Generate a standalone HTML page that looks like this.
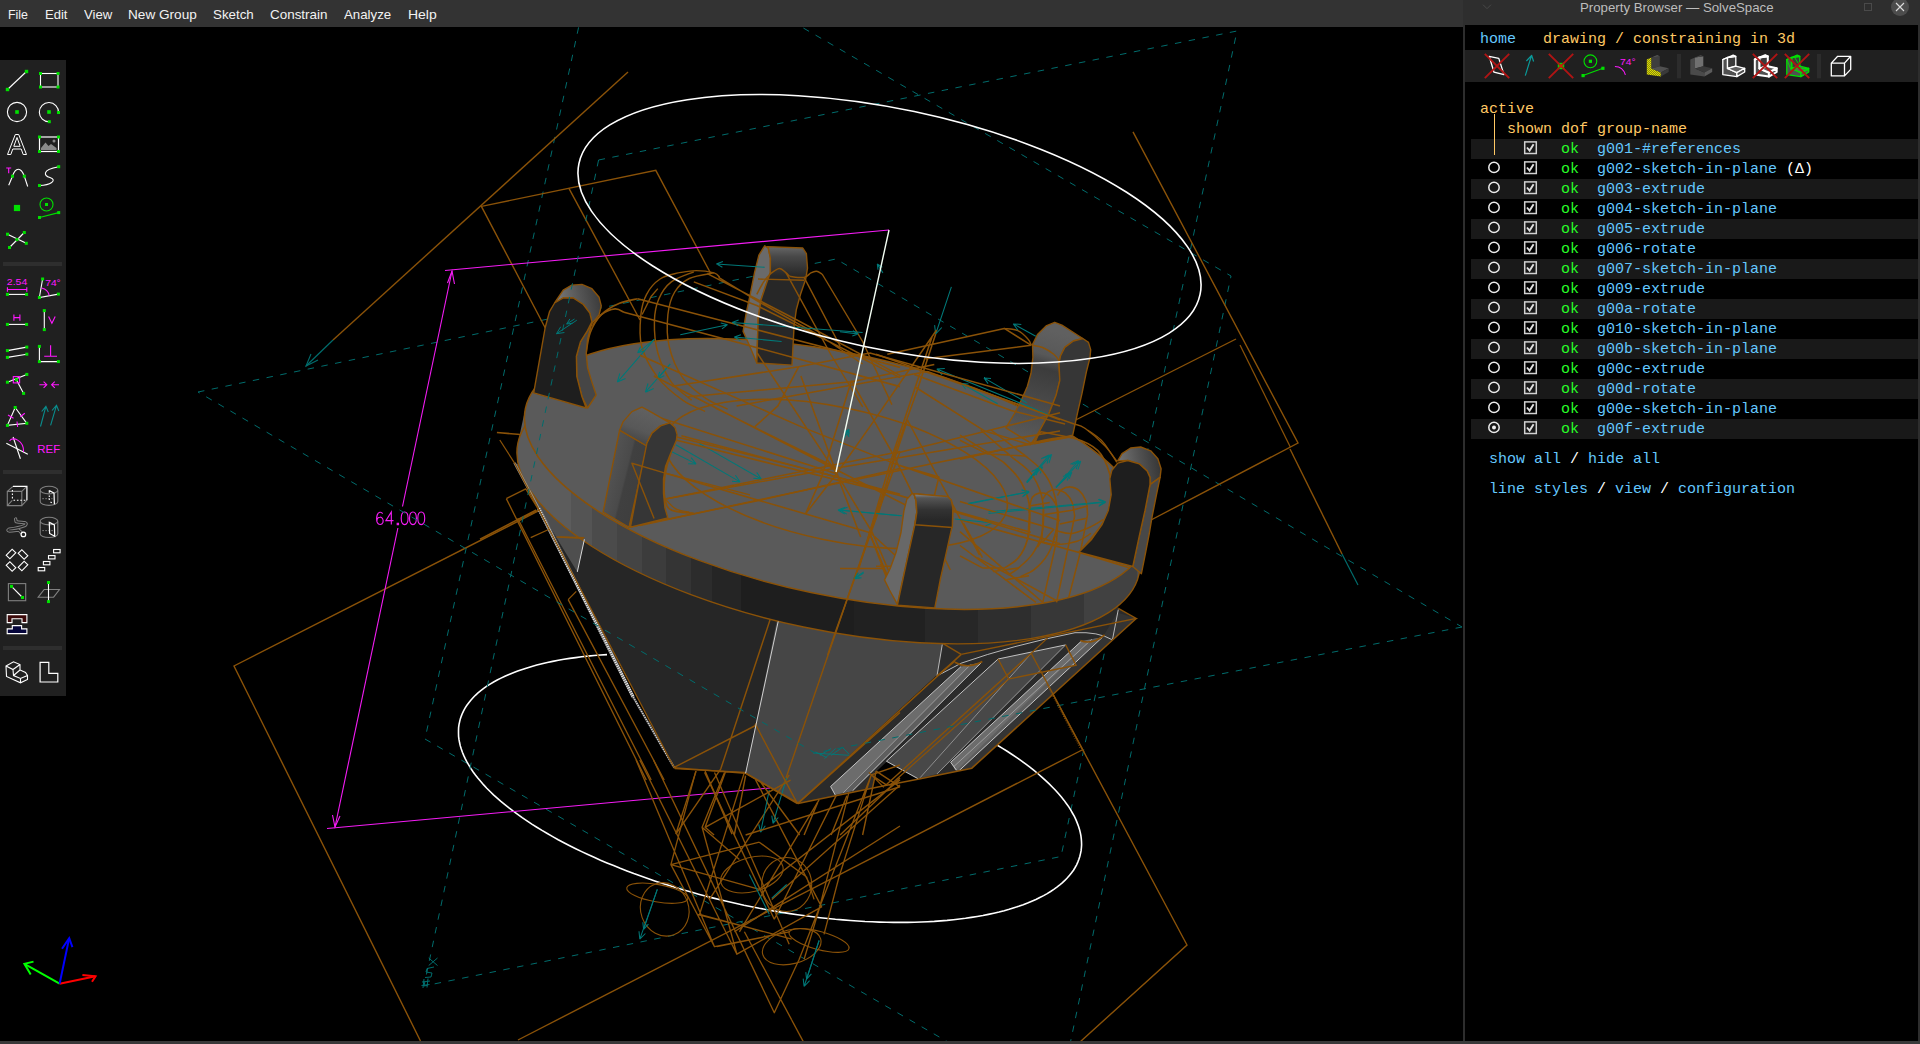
<!DOCTYPE html>
<html>
<head>
<meta charset="utf-8">
<title>SolveSpace</title>
<style>
html,body{margin:0;padding:0;background:#000;}
body{width:1920px;height:1044px;overflow:hidden;position:relative;font-family:"Liberation Sans",sans-serif;}
#view{position:absolute;left:0;top:0;width:1920px;height:1044px;}
#menubar{position:absolute;left:0;top:0;width:1463px;height:27px;background:#333333;}
#menubar span{position:absolute;top:7px;font-size:13.5px;line-height:16px;color:#f2f2f2;white-space:nowrap;transform-origin:0 50%;}
#toolbar{position:absolute;left:0;top:60px;width:66px;height:636px;background:#202020;}
#toolbar .sep{position:absolute;left:3px;width:59px;height:4px;background:#2e2e2e;}
#toolbar svg{position:absolute;left:0;top:0;}
#bottom{position:absolute;left:0;top:1041px;width:1920px;height:3px;background:#393939;}
#pborder{position:absolute;left:1463px;top:0;width:457px;height:1041px;background:#2d2d2d;}
#panel{position:absolute;left:1465px;top:25px;width:453px;height:1016px;background:#000;overflow:hidden;}
#ptitle{position:absolute;left:1463px;top:0;width:457px;height:25px;background:#2e2e2e;}
#ptitle .t{position:absolute;left:117.3px;top:0px;transform:scaleX(0.981);font-size:13.5px;line-height:16px;color:#bdbdbd;white-space:nowrap;transform-origin:0 50%;}
.row{position:absolute;left:6px;width:447px;height:20px;background:#191919;}
.tx{position:absolute;margin-top:2px;font-family:"Liberation Mono",monospace;font-size:15px;line-height:20px;height:20px;white-space:pre;letter-spacing:0;}
.l{color:#64c8ff;} .t2{color:#ffc864;} .s{color:#28ff28;} .d{color:#ffffff;}
#pbar{position:absolute;left:0;top:25px;width:453px;height:32px;background:#202020;}
</style>
</head>
<body>
<svg id="view" width="1920" height="1044" viewBox="0 0 1920 1044">
<!--VIEW-START-->
<defs>
<linearGradient id="rim" gradientUnits="userSpaceOnUse" x1="515" y1="0" x2="1150" y2="0"><stop offset="0.0000" stop-color="#5c5c5c"/><stop offset="0.0882" stop-color="#5c5c5c"/><stop offset="0.0882" stop-color="#545454"/><stop offset="0.1213" stop-color="#545454"/><stop offset="0.1213" stop-color="#4b4b4b"/><stop offset="0.1606" stop-color="#4b4b4b"/><stop offset="0.1606" stop-color="#444444"/><stop offset="0.2000" stop-color="#444444"/><stop offset="0.2000" stop-color="#3c3c3c"/><stop offset="0.2378" stop-color="#3c3c3c"/><stop offset="0.2378" stop-color="#343434"/><stop offset="0.2772" stop-color="#343434"/><stop offset="0.2772" stop-color="#2c2c2c"/><stop offset="0.3102" stop-color="#2c2c2c"/><stop offset="0.3102" stop-color="#252525"/><stop offset="0.3559" stop-color="#252525"/><stop offset="0.3559" stop-color="#1e1e1e"/><stop offset="0.5339" stop-color="#1e1e1e"/><stop offset="0.5339" stop-color="#212121"/><stop offset="0.6457" stop-color="#212121"/><stop offset="0.6457" stop-color="#272727"/><stop offset="0.7291" stop-color="#272727"/><stop offset="0.7291" stop-color="#2e2e2e"/><stop offset="0.8126" stop-color="#2e2e2e"/><stop offset="0.8126" stop-color="#373737"/><stop offset="0.8961" stop-color="#373737"/><stop offset="0.8961" stop-color="#414141"/><stop offset="0.9795" stop-color="#414141"/><stop offset="0.9795" stop-color="#4b4b4b"/><stop offset="1.0000" stop-color="#4b4b4b"/></linearGradient>
<linearGradient id="capd" x1="0" y1="0" x2="0" y2="1"><stop offset="0" stop-color="#4e4e4e"/><stop offset="0.22" stop-color="#2a2a2a"/><stop offset="1" stop-color="#242424"/></linearGradient>
<linearGradient id="capA" x1="0" y1="1" x2="1" y2="0"><stop offset="0" stop-color="#6a6a6a"/><stop offset="1" stop-color="#3a3a3a"/></linearGradient>
<clipPath id="vclip"><rect x="0" y="27" width="1463" height="1014"/></clipPath>
</defs>
<g clip-path="url(#vclip)">
<g id="dashback">
<path d="M198.0 392.0 L836.0 259.0 L1462.0 627.0" stroke="#006c6c" stroke-width="1.0" fill="none" stroke-dasharray="6.5 7.5"/>
<path d="M584.5 0.0 L425.0 739.0 L960.0 1049.0" stroke="#006c6c" stroke-width="1.0" fill="none" stroke-dasharray="6.5 7.5"/>
<path d="M755.0 0.0 L1231.0 276.0 L1069.0 1049.0" stroke="#006c6c" stroke-width="1.0" fill="none" stroke-dasharray="6.5 7.5"/>
<path d="M598.6 160.0 L1237.0 31.0 L1061.0 856.5 L424.0 986.0" stroke="#006c6c" stroke-width="1.0" fill="none" stroke-dasharray="6.5 7.5"/>
</g>
<path d="M997.0 745.0 L1002.1 748.1 L1007.2 751.3 L1012.1 754.5 L1016.8 757.7 L1021.4 760.9 L1025.9 764.2 L1030.2 767.4 L1034.3 770.7 L1038.3 774.0 L1042.1 777.3 L1045.7 780.6 L1049.2 783.9 L1052.5 787.2 L1055.7 790.5 L1058.6 793.8 L1061.4 797.1 L1064.1 800.4 L1066.5 803.7 L1068.8 806.9 L1070.8 810.2 L1072.7 813.5 L1074.5 816.7 L1076.0 819.9 L1077.3 823.1 L1078.5 826.3 L1079.5 829.4 L1080.3 832.6 L1080.9 835.7 L1081.3 838.8 L1081.5 841.8 L1081.6 844.8 L1081.4 847.8 L1081.1 850.7 L1080.5 853.6 L1079.8 856.5 L1078.9 859.3 L1077.8 862.1 L1076.6 864.8 L1075.1 867.5 L1073.5 870.2 L1071.6 872.8 L1069.6 875.3 L1067.4 877.8 L1065.1 880.2 L1062.5 882.6 L1059.8 884.9 L1056.9 887.2 L1053.8 889.4 L1050.6 891.5 L1047.2 893.6 L1043.6 895.6 L1039.8 897.5 L1035.9 899.4 L1031.8 901.2 L1027.6 903.0 L1023.2 904.7 L1018.7 906.3 L1014.0 907.8 L1009.2 909.3 L1004.2 910.7 L999.1 912.0 L993.8 913.2 L988.4 914.4 L982.9 915.5 L977.2 916.5 L971.4 917.4 L965.5 918.3 L959.5 919.0 L953.4 919.7 L947.1 920.4 L940.8 920.9 L934.3 921.4 L927.8 921.7 L921.1 922.0 L914.4 922.2 L907.6 922.4 L900.6 922.4 L893.6 922.4 L886.6 922.3 L879.4 922.1 L872.2 921.8 L865.0 921.5 L857.7 921.0 L850.3 920.5 L842.9 919.9 L835.4 919.3 L827.9 918.5 L820.3 917.7 L812.8 916.8 L805.2 915.8 L797.5 914.7 L789.9 913.6 L782.3 912.4 L774.6 911.1 L766.9 909.7 L759.3 908.3 L751.6 906.7 L744.0 905.2 L736.4 903.5 L728.8 901.8 L721.2 900.0 L713.6 898.1 L706.1 896.2 L698.6 894.2 L691.2 892.1 L683.8 890.0 L676.5 887.8 L669.2 885.6 L662.0 883.3 L654.8 880.9 L647.8 878.5 L640.8 876.0 L633.8 873.5 L627.0 870.9 L620.2 868.3 L613.6 865.6 L607.0 862.9 L600.5 860.2 L594.1 857.3 L587.9 854.5 L581.7 851.6 L575.7 848.7 L569.7 845.7 L563.9 842.7 L558.2 839.7 L552.7 836.6 L547.3 833.5 L542.0 830.4 L536.8 827.2 L531.8 824.1 L527.0 820.9 L522.2 817.7 L517.7 814.4 L513.3 811.2 L509.0 807.9 L504.9 804.6 L500.9 801.4 L497.2 798.1 L493.5 794.8 L490.1 791.5 L486.8 788.2 L483.7 784.9 L480.8 781.5 L478.0 778.3 L475.4 775.0 L473.0 771.7 L470.8 768.4 L468.8 765.1 L466.9 761.9 L465.2 758.7 L463.7 755.4 L462.4 752.2 L461.3 749.1 L460.3 745.9 L459.6 742.8 L459.0 739.7 L458.6 736.6 L458.5 733.6 L458.5 730.6 L458.6 727.6 L459.0 724.7 L459.6 721.8 L460.3 718.9 L461.3 716.1 L462.4 713.3 L463.7 710.6 L465.2 707.9 L466.9 705.3 L468.8 702.7 L470.8 700.2 L473.0 697.7 L475.4 695.3 L478.0 692.9 L480.8 690.6 L483.7 688.4 L486.8 686.2 L490.1 684.1 L493.6 682.0 L497.2 680.0 L501.0 678.1 L504.9 676.2 L509.0 674.4 L513.3 672.7 L517.7 671.0 L522.3 669.4 L527.0 667.9 L531.8 666.4 L536.8 665.1 L542.0 663.8 L547.3 662.5 L552.7 661.4 L558.3 660.3 L563.9 659.3 L569.7 658.4 L575.7 657.6 L581.7 656.8 L587.9 656.1 L594.1 655.5 L600.5 655.0 L607.0 654.6" stroke="#ffffff" stroke-width="1.6" fill="none" />
<g id="obehind">
<path d="M628.0 72.0 L333.0 340.0" stroke="#8a5208" stroke-width="1.4" fill="none" />
<path d="M333.0 340.0 L306.0 366.0" stroke="#006c6c" stroke-width="1.2" fill="none" />
<path d="M318.0 360.0 L306.0 366.0 L311.0 354.0" stroke="#006c6c" stroke-width="1.1" fill="none" />
<path d="M545.3 328.0 L481.4 206.4 L655.8 170.3 L711.0 274.0" stroke="#8a5208" stroke-width="1.4" fill="none" />
<path d="M568.8 188.2 L640.0 320.0" stroke="#8a5208" stroke-width="1.4" fill="none" />
<path d="M548.0 506.0 L234.0 666.0 L420.5 1041.0" stroke="#8a5208" stroke-width="1.4" fill="none" />
<path d="M518.0 1040.0 L1082.0 750.0" stroke="#8a5208" stroke-width="1.4" fill="none" />
<path d="M1031.0 653.0 L1187.0 945.0 L1080.0 1042.0" stroke="#8a5208" stroke-width="1.4" fill="none" />
<path d="M1133.0 131.8 L1298.0 443.0 L1151.0 520.0" stroke="#8a5208" stroke-width="1.4" fill="none" />
<path d="M1290.0 449.0 L1342.0 554.0" stroke="#8a5208" stroke-width="1.4" fill="none" />
<path d="M1342.0 554.0 L1358.0 585.0" stroke="#006c6c" stroke-width="1.2" fill="none" />
<path d="M1236.0 339.0 L1042.0 437.0" stroke="#8a5208" stroke-width="1.4" fill="none" />
</g>
<g id="dim">
<path d="M445.0 270.5 L889.0 230.0" stroke="#f51cf5" stroke-width="1.1" fill="none" />
<path d="M327.0 828.5 L770.0 788.0" stroke="#f51cf5" stroke-width="1.1" fill="none" />
<path d="M452.0 271.0 L402.5 506.5" stroke="#f51cf5" stroke-width="1.1" fill="none" />
<path d="M397.9 528.0 L335.0 827.0" stroke="#f51cf5" stroke-width="1.1" fill="none" />
<path d="M447.5 283.0 L452.0 271.0 L454.5 284.0" stroke="#f51cf5" stroke-width="1.1" fill="none" />
<path d="M332.5 815.0 L335.0 827.0 L340.0 816.0" stroke="#f51cf5" stroke-width="1.1" fill="none" />
<path d="M382.6 513.6 C381.40000000000003 511.6 378.20000000000005 511.6 377.20000000000005 515 C376.40000000000003 518 376.40000000000003 521 377.40000000000003 522.8000000000001 C378.6 525.2 381.8 525.2 383.00000000000006 522.2 C383.8 519.2 381.8 517.0 380.0 517.2 C378.20000000000005 517.2 377.0 519.0 376.90000000000003 521.0 M391.3 524.6 V512 L385.9 520.6 H393.5 M397.2 523.2 h1.3 v1.4 h-1.3 Z M404.65 512 C401.8 512 401.2 515 401.2 518.3 C401.2 521.6 401.8 524.6 404.65 524.6 C407.49999999999994 524.6 408.09999999999997 521.6 408.09999999999997 518.3 C408.09999999999997 515 407.49999999999994 512 404.65 512 Z M412.95 512 C410.1 512 409.5 515 409.5 518.3 C409.5 521.6 410.1 524.6 412.95 524.6 C415.79999999999995 524.6 416.4 521.6 416.4 518.3 C416.4 515 415.79999999999995 512 412.95 512 Z M421.25 512 C418.40000000000003 512 417.8 515 417.8 518.3 C417.8 521.6 418.40000000000003 524.6 421.25 524.6 C424.09999999999997 524.6 424.7 521.6 424.7 518.3 C424.7 515 424.09999999999997 512 421.25 512 Z " stroke="#f51cf5" stroke-width="1.15" fill="none" />
</g>
<g id="model">
<polygon points="514.4,462.8 674.0,767.3 745.6,773.3 778.2,621.4 700.0,560.0" fill="#262626" stroke="none" stroke-width="1" />
<polygon points="514.4,462.8 538.8,508.4 577.3,571.9 584.4,539.3 600.0,500.0" fill="#4e4e4e" stroke="none" stroke-width="1" />
<polygon points="778.0,615.0 745.6,773.3 797.4,803.7 937.0,675.0 946.0,640.0" fill="#464646" stroke="none" stroke-width="1" />
<polygon points="942.3,643.2 942.3,621.1 1118.3,587.4 1118.3,608.4 1136.2,618.5 971.8,768.2 919.1,779.1 885.4,785.5 797.9,803.4 937.0,675.9" fill="#2b2b2b" stroke="none" stroke-width="1" stroke-linejoin="round"/>
<polygon points="1102.4,637.9 1117.2,612.6 1136.2,618.5 971.8,768.2 959.1,770.7" fill="#343434" stroke="none" stroke-width="1" stroke-linejoin="round"/>
<polygon points="961.2,666.4 981.3,662.6 852.7,790.7 835.2,794.9 830.6,786.5" fill="#6c6c6c" stroke="none" stroke-width="1" stroke-linejoin="round"/>
<polygon points="970.7,664.5 981.3,662.6 852.7,790.7 843.2,792.8" fill="#5e5e5e" stroke="none" stroke-width="1" stroke-linejoin="round"/>
<polygon points="998.1,659.0 1065.6,644.9 937.0,773.9 918.0,778.7 886.4,761.2" fill="#484848" stroke="none" stroke-width="1" stroke-linejoin="round"/>
<polygon points="1081.4,641.1 1102.4,637.3 959.1,770.7 955.3,770.3 950.7,762.3" fill="#6c6c6c" stroke="none" stroke-width="1" stroke-linejoin="round"/>
<polygon points="1091.9,639.2 1102.4,637.3 959.1,770.7 956.6,770.3" fill="#5e5e5e" stroke="none" stroke-width="1" stroke-linejoin="round"/>
<polygon points="886.4,761.9 917.4,779.1 885.4,785.9 872.7,788.2 875.3,772.4" fill="#000000" stroke="none" stroke-width="1" stroke-linejoin="round"/>
<path d="M961.2 666.4 L830.6 786.5" stroke="#d0d0d0" stroke-width="0.9" fill="none" />
<path d="M981.3 662.6 L852.7 790.7" stroke="#d0d0d0" stroke-width="0.9" fill="none" />
<path d="M970.7 664.5 L843.2 792.8" stroke="#a8a8a8" stroke-width="0.8" fill="none" />
<path d="M998.1 659.0 L886.4 761.2 L918.0 778.7" stroke="#d0d0d0" stroke-width="0.9" fill="none" />
<path d="M998.1 659.0 L1065.6 644.9" stroke="#d0d0d0" stroke-width="0.9" fill="none" />
<path d="M1065.6 644.9 L937.0 773.9" stroke="#b0b0b0" stroke-width="0.8" fill="none" />
<path d="M1032.9 651.6 L920.1 777.7" stroke="#a0a0a0" stroke-width="0.8" fill="none" />
<path d="M1081.4 641.1 L950.7 762.3" stroke="#d0d0d0" stroke-width="0.9" fill="none" />
<path d="M1102.4 637.3 L959.1 770.7" stroke="#d0d0d0" stroke-width="0.9" fill="none" />
<path d="M1091.9 639.2 L953.9 766.5" stroke="#a8a8a8" stroke-width="0.8" fill="none" />
<path d="M830.6 786.5 L835.2 794.9" stroke="#d0d0d0" stroke-width="0.9" fill="none" />
<path d="M950.7 762.3 L956.6 770.3" stroke="#d0d0d0" stroke-width="0.9" fill="none" />
<path d="M942.3 644.3 L937.0 675.9 L961.2 663.2" stroke="#c8c8c8" stroke-width="0.9" fill="none" />
<path d="M961.2 663.2 Q1011.8 645.3 1075.0 632.7 Q1098.2 631.6 1111.9 639.6" stroke="#c8c8c8" stroke-width="0.9" fill="none"/>
<path d="M1118.3 609.5 L1112.6 639.0" stroke="#c8c8c8" stroke-width="0.9" fill="none" />
<path d="M961.2 654.4 L797.9 803.4" stroke="#8a5208" stroke-width="1.566" fill="none" />
<path d="M1136.2 618.5 L971.8 768.2 L919.1 779.1 L885.4 785.5 L797.9 803.4" stroke="#8a5208" stroke-width="1.566" fill="none" />
<path d="M961.2 654.4 L1136.2 618.5 L1118.3 608.4" stroke="#8a5208" stroke-width="1.3920000000000001" fill="none" />
<path d="M942.3 643.2 L961.2 654.4" stroke="#8a5208" stroke-width="1.3920000000000001" fill="none" />
<path d="M937.0 675.9 L954.9 661.1" stroke="#8a5208" stroke-width="1.3920000000000001" fill="none" />
<path d="M1031.8 652.7 L885.4 785.5" stroke="#8a5208" stroke-width="1.3920000000000001" fill="none" />
<path d="M1008.7 679.0 L889.6 785.5" stroke="#8a5208" stroke-width="1.218" fill="none" />
<path d="M998.1 659.0 L1008.7 679.0 L1076.1 665.3 L1065.6 644.9" stroke="#8a5208" stroke-width="1.3920000000000001" fill="none" />
<path d="M1031.8 652.7 L1047.7 637.9" stroke="#8a5208" stroke-width="1.218" fill="none" />
<path d="M954.9 662.2 Q967.6 669.5 982.3 661.5" stroke="#8a5208" stroke-width="1.6" fill="none"/>
<path d="M1080.3 640.5 Q1091.9 645.3 1104.6 634.8" stroke="#8a5208" stroke-width="1.6" fill="none"/>
<polygon points="1139.1,573.8 1138.3,576.9 1137.3,580.0 1136.2,583.0 1134.8,585.9 1133.2,588.8 1131.3,591.6 1129.3,594.4 1127.1,597.1 1124.7,599.7 1122.0,602.3 1119.2,604.9 1116.2,607.3 1112.9,609.7 1109.5,612.0 1105.9,614.3 1102.1,616.4 1098.1,618.6 1093.9,620.6 1089.5,622.5 1085.0,624.4 1080.2,626.2 1075.4,627.9 1070.3,629.5 1065.1,631.1 1059.7,632.6 1054.1,633.9 1048.4,635.2 1042.6,636.4 1036.6,637.5 1030.4,638.6 1024.2,639.5 1017.7,640.4 1011.2,641.1 1004.5,641.8 997.7,642.4 990.8,642.9 983.8,643.2 976.7,643.5 969.5,643.8 962.1,643.9 954.7,643.9 947.2,643.8 939.6,643.7 932.0,643.4 924.3,643.1 916.5,642.6 908.6,642.1 900.7,641.5 892.7,640.7 884.7,639.9 876.7,639.0 868.6,638.1 860.5,637.0 852.4,635.8 844.3,634.6 836.1,633.2 827.9,631.8 819.8,630.3 811.6,628.7 803.5,627.0 795.4,625.3 787.3,623.5 779.2,621.5 771.2,619.6 763.2,617.5 755.2,615.3 747.3,613.1 739.5,610.8 731.7,608.5 724.0,606.1 716.3,603.6 708.7,601.0 701.3,598.4 693.9,595.7 686.5,593.0 679.3,590.2 672.2,587.3 665.2,584.4 658.3,581.4 651.6,578.4 644.9,575.4 638.4,572.3 632.0,569.1 625.7,565.9 619.6,562.7 613.6,559.4 607.8,556.1 602.1,552.8 596.6,549.4 591.2,546.0 586.0,542.6 581.0,539.2 576.1,535.7 571.4,532.2 566.9,528.7 562.5,525.2 558.4,521.7 554.4,518.1 550.6,514.6 547.0,511.0 543.6,507.5 540.4,503.9 537.4,500.4 534.6,496.9 532.0,493.3 529.6,489.8 527.4,486.3 525.4,482.8 523.6,479.3 522.0,475.9 520.7,472.5 519.5,469.0 518.6,465.7 517.8,462.3 517.3,459.0 517.0,455.7 516.9,452.5 517.0,449.2 517.4,446.1 517.9,443.0 518.7,439.9 519.7,436.8 520.8,433.8 522.2,430.9 523.8,428.0 525.7,425.2 527.7,422.4 529.9,419.7 532.3,417.1 535.0,414.5 537.8,411.9 540.8,409.5 544.1,407.1 547.5,404.8 551.1,402.5 554.9,400.4 558.9,398.2 563.1,396.2 567.5,394.3 572.0,392.4 576.8,390.6 581.6,388.9 586.7,387.3 591.9,385.7 597.3,384.2 602.9,382.9 608.6,381.6 614.4,380.4 620.4,379.3 626.6,378.2 632.8,377.3 639.3,376.4 645.8,375.7 652.5,375.0 659.3,374.4 666.2,373.9 673.2,373.6 680.3,373.3 687.5,373.0 694.9,372.9 702.3,372.9 709.8,373.0 717.4,373.1 725.0,373.4 732.7,373.7 740.5,374.2 748.4,374.7 756.3,375.3 764.3,376.1 772.3,376.9 780.3,377.8 788.4,378.7 796.5,379.8 804.6,381.0 812.7,382.2 820.9,383.6 829.1,385.0 837.2,386.5 845.4,388.1 853.5,389.8 861.6,391.5 869.7,393.3 877.8,395.3 885.8,397.2 893.8,399.3 901.8,401.5 909.7,403.7 917.5,406.0 925.3,408.3 933.0,410.7 940.7,413.2 948.3,415.8 955.7,418.4 963.1,421.1 970.5,423.8 977.7,426.6 984.8,429.5 991.8,432.4 998.7,435.4 1005.4,438.4 1012.1,441.4 1018.6,444.5 1025.0,447.7 1031.3,450.9 1037.4,454.1 1043.4,457.4 1049.2,460.7 1054.9,464.0 1060.4,467.4 1065.8,470.8 1071.0,474.2 1076.0,477.6 1080.9,481.1 1085.6,484.6 1090.1,488.1 1094.5,491.6 1098.6,495.1 1102.6,498.7 1106.4,502.2 1110.0,505.8 1113.4,509.3 1116.6,512.9 1119.6,516.4 1122.4,519.9 1125.0,523.5 1127.4,527.0 1129.6,530.5 1131.6,534.0 1133.4,537.5 1135.0,540.9 1136.3,544.3 1137.5,547.8 1138.4,551.1 1139.2,554.5 1139.7,557.8 1140.0,561.1 1140.1,564.3 1140.0,567.6 1139.6,570.7" fill="url(#rim)" stroke="none" stroke-width="1" />
<polygon points="1146.5,539.7 525.5,408.1 518.0,442.6 1139.0,574.2" fill="url(#rim)" stroke="none" stroke-width="1" />
<ellipse cx="828.5" cy="508.4" rx="317.4" ry="121.25" transform="rotate(11.9 828.5 508.4)" fill="none" stroke="#8a5208" stroke-width="1.4" />
<ellipse cx="836" cy="473.9" rx="317.4" ry="121.25" transform="rotate(11.9 836 473.9)" fill="#5a5a5a" stroke="#8a5208" stroke-width="1.5" />
<defs>
<linearGradient id="gA" gradientUnits="userSpaceOnUse" x1="560" y1="300" x2="600" y2="292"><stop offset="0" stop-color="#747474"/><stop offset="0.5" stop-color="#555555"/><stop offset="1" stop-color="#3a3a3a"/></linearGradient>
<linearGradient id="gD" gradientUnits="userSpaceOnUse" x1="1120" y1="458" x2="1160" y2="452"><stop offset="0" stop-color="#707070"/><stop offset="0.5" stop-color="#505050"/><stop offset="1" stop-color="#343434"/></linearGradient>
<linearGradient id="gB" gradientUnits="userSpaceOnUse" x1="0" y1="246" x2="0" y2="276"><stop offset="0" stop-color="#686868"/><stop offset="0.35" stop-color="#484848"/><stop offset="1" stop-color="#272727"/></linearGradient>
<linearGradient id="gE" gradientUnits="userSpaceOnUse" x1="0" y1="494" x2="0" y2="520"><stop offset="0" stop-color="#8a8a8a"/><stop offset="0.15" stop-color="#555555"/><stop offset="0.6" stop-color="#333333"/><stop offset="1" stop-color="#282828"/></linearGradient>
<linearGradient id="gC" gradientUnits="userSpaceOnUse" x1="1050" y1="330" x2="1020" y2="440"><stop offset="0" stop-color="#606060"/><stop offset="0.22" stop-color="#585858"/><stop offset="0.34" stop-color="#3c3c3c"/><stop offset="0.6" stop-color="#484848"/><stop offset="1" stop-color="#5a5a5a"/></linearGradient>
<linearGradient id="gF" gradientUnits="userSpaceOnUse" x1="640" y1="408" x2="628" y2="440"><stop offset="0" stop-color="#606060"/><stop offset="0.6" stop-color="#585858"/><stop offset="1" stop-color="#454545"/></linearGradient>
<linearGradient id="gF2" gradientUnits="userSpaceOnUse" x1="605" y1="470" x2="645" y2="480"><stop offset="0" stop-color="#555555"/><stop offset="0.5" stop-color="#4a4a4a"/><stop offset="0.55" stop-color="#404040"/><stop offset="1" stop-color="#3e3e3e"/></linearGradient>
</defs>
<polygon points="764.7,245.8 758.9,255.2 754.6,272.4 750.3,294.0 746.0,314.1 743.1,331.4 748.9,344.3 756.8,363.0 757.5,340.0 758.2,318.4 761.1,299.7 766.8,282.5 770.4,272.4 770.4,258.1 768.3,248.0" fill="#6a6a6a" stroke="#8a5208" stroke-width="1.4" stroke-linejoin="round" />
<polygon points="767.5,246.6 802.8,248.0 806.4,253.7 807.5,268.1 805.6,279.6 800.6,294.0 796.3,309.8 794.1,325.6 793.1,344.3 792.0,365.1 756.8,363.0 757.5,340.0 758.2,318.4 761.1,299.7 766.8,282.5 770.4,272.4 770.4,258.1 768.3,248.0" fill="url(#gB)" stroke="#8a5208" stroke-width="1.4" stroke-linejoin="round" />
<polygon points="1054.7,322.3 1046.1,325.9 1037.5,334.5 1032.5,344.6 1032.9,357.5 1031.0,373.3 1027.4,386.2 1021.7,399.2 1014.5,413.5 1005.9,427.9 1031.7,443.7 1040.4,429.3 1049.0,413.5 1056.2,394.9 1059.8,380.5 1059.0,363.2 1060.5,356.0 1064.8,347.4 1073.4,341.0 1082.8,338.5 1061.9,325.2" fill="url(#gC)" stroke="#8a5208" stroke-width="1.4" stroke-linejoin="round" />
<polygon points="1059.0,363.2 1060.5,356.0 1064.8,347.4 1073.4,341.0 1082.8,338.5 1088.5,342.4 1090.7,349.6 1090.0,357.5 1086.4,371.9 1082.0,393.4 1077.7,412.1 1074.9,425.0 1072.7,435.1 1034.6,443.7 1040.4,429.3 1049.0,413.5 1056.2,394.9 1059.8,380.5" fill="#363636" stroke="#8a5208" stroke-width="1.4" stroke-linejoin="round" />
</g>
<path d="M514.4 462.8 L538.8 508.4" stroke="#9a9a9a" stroke-width="2.2" fill="none" stroke-linejoin="round" />
<path d="M538.8 508.4 L633.3 697.2" stroke="#6e6e6e" stroke-width="3.4" fill="none" stroke-linejoin="round" />
<path d="M538.8 508.4 L633.3 697.2" stroke="#f0f0f0" stroke-width="3.0" fill="none" stroke-linejoin="round" stroke-dasharray="1 1.2"/>
<path d="M633.3 697.2 L674.0 767.3" stroke="#5a5a5a" stroke-width="2.2" fill="none" stroke-linejoin="round" />
<path d="M633.3 697.2 L674.0 767.3" stroke="#e0e0e0" stroke-width="1.8" fill="none" stroke-linejoin="round" stroke-dasharray="0.9 1.4"/>
<path d="M499.8 440.0 L514.4 462.8 L674.0 767.3" stroke="#8a5208" stroke-width="1.248" fill="none" stroke-linejoin="round" />
<path d="M584.4 539.3 L577.3 571.9" stroke="#d8d8d8" stroke-width="1" fill="none" stroke-linejoin="round" />
<path d="M506.3 498.6 L646.3 780.0 M517.7 518.2 L651.2 780.0 M568.2 599.6 L664.2 780.0 M506.3 498.6 L525.8 488.8 L538.8 510.0 L517.7 519.8 M530.7 537.7 L548.6 529.5 M568.2 599.6 L576.3 591.4 M560.0 537.0 L584.4 537.7" stroke="#8a5208" stroke-width="1.3439999999999999" fill="none" stroke-linejoin="round" />
<path d="M545.3 328.0 L547.5 332.5" stroke="#8a5208" stroke-width="1.3439999999999999" fill="none" stroke-linejoin="round" />
<path d="M585.8 355.0 C586.5 351.3 587.7 339.3 590.3 332.5 C592.9 325.8 596.7 319.4 601.5 314.5 C606.4 309.7 613.5 305.9 619.5 303.3 C625.5 300.7 634.6 299.5 637.6 298.8" stroke="#8a5208" stroke-width="1.632" fill="none" />
<path d="M592.5 325.8 C594.0 323.9 597.8 317.3 601.5 314.5 C605.3 311.7 611.3 309.3 615.0 308.9 C618.8 308.5 622.5 311.7 624.0 312.3" stroke="#8a5208" stroke-width="1.632" fill="none" />
<path d="M637.6 298.8 L750.1 328.0 L862.6 357.3 L900.0 367.4" stroke="#8a5208" stroke-width="1.632" fill="none" stroke-linejoin="round" />
<path d="M624.0 312.3 L738.8 342.7 L900.0 386.6" stroke="#8a5208" stroke-width="1.632" fill="none" stroke-linejoin="round" />
<path d="M678.1 272.9 C675.1 273.9 665.3 275.4 660.1 279.0 C654.8 282.5 649.7 288.3 646.6 294.3 C643.4 300.2 641.8 305.9 640.9 314.5 C640.1 323.2 638.8 335.5 641.6 346.0 C644.4 356.5 651.0 368.5 657.8 377.6 C664.6 386.6 674.7 394.4 682.6 400.1 C690.4 405.7 701.3 409.4 705.1 411.3" stroke="#8a5208" stroke-width="1.44" fill="none" />
<path d="M693.8 271.8 C690.1 273.5 677.1 277.4 671.3 281.9 C665.5 286.4 661.7 292.2 658.9 298.8 C656.1 305.3 654.6 312.3 654.4 321.3 C654.2 330.3 655.0 342.7 657.8 352.8 C660.6 362.9 665.7 374.2 671.3 382.1 C676.9 389.9 688.2 397.1 691.6 400.1" stroke="#8a5208" stroke-width="1.44" fill="none" />
<path d="M714.1 272.9 C709.9 273.8 695.9 275.3 689.3 278.5 C682.8 281.7 678.3 286.0 674.7 292.0 C671.1 298.0 668.9 305.5 667.9 314.5 C667.0 323.5 666.6 335.5 669.1 346.0 C671.5 356.5 676.6 368.9 682.6 377.6 C688.6 386.2 697.6 392.6 705.1 397.8 C712.6 403.1 723.8 407.2 727.6 409.1" stroke="#8a5208" stroke-width="1.44" fill="none" />
<path d="M678.1 272.9 C681.1 272.5 690.1 270.6 696.1 270.6 C702.1 270.6 710.1 271.8 714.1 272.9 C718.0 274.0 718.8 276.6 719.7 277.4" stroke="#8a5208" stroke-width="1.44" fill="none" />
<path d="M718.6 277.4 L761.3 303.3 L822.1 337.0 L862.6 364.0 M693.8 281.9 L756.8 305.5 L828.9 341.5 L900.0 377.6 M707.3 273.6 L795.1 319.0 L900.0 375.3 M642.1 314.5 L651.1 296.5 L657.8 288.6" stroke="#8a5208" stroke-width="1.44" fill="none" stroke-linejoin="round" />
<path d="M756.8 294.3 C758.0 292.2 761.3 285.3 763.6 281.9 C765.8 278.5 767.7 276.3 770.3 274.0 C773.0 271.8 776.7 268.6 779.3 268.4 C782.0 268.2 784.4 271.6 786.1 272.9 C787.8 274.2 788.9 275.7 789.5 276.3" stroke="#8a5208" stroke-width="1.536" fill="none" />
<path d="M789.5 276.3 C791.9 276.5 800.5 278.0 804.1 277.4 C807.7 276.8 808.8 273.9 810.9 272.9 C812.9 271.9 814.6 271.1 816.5 271.3 C818.4 271.5 821.2 273.6 822.1 274.0" stroke="#8a5208" stroke-width="1.536" fill="none" />
<path d="M822.1 274.0 L862.6 341.5 L891.9 404.6 M786.1 272.9 L831.1 355.0 L862.6 406.8 M758.0 279.0 L804.1 280.3 M804.1 277.4 L840.1 346.0" stroke="#8a5208" stroke-width="1.44" fill="none" stroke-linejoin="round" />
<path d="M654.4 339.3 L617.3 382.1 M619.8 373.4 L617.3 382.1 M625.5 378.4 L617.3 382.1" stroke="#007878" stroke-width="1.05" fill="none"/>
<path d="M670.2 364.0 L645.4 392.2 M648.0 383.5 L645.4 392.2 M653.7 388.6 L645.4 392.2" stroke="#007878" stroke-width="1.05" fill="none"/>
<path d="M654.4 339.3 L637.6 352.8 M640.7 346.5 L637.6 352.8 M644.4 351.1 L637.6 352.8" stroke="#007878" stroke-width="1.05" fill="none"/>
<path d="M670.2 364.0 L657.8 378.7 M659.6 371.9 L657.8 378.7 M664.2 375.7 L657.8 378.7" stroke="#007878" stroke-width="1.05" fill="none"/>
<path d="M764.7 267.3 L716.3 263.9 M722.9 261.4 L716.3 263.9 M722.4 267.3 L716.3 263.9" stroke="#007878" stroke-width="1.05" fill="none"/>
<path d="M680.3 334.8 L727.6 324.7 M722.0 328.9 L727.6 324.7 M720.8 323.1 L727.6 324.7" stroke="#007878" stroke-width="1.05" fill="none"/>
<path d="M862.6 332.5 L732.1 322.4 M738.6 319.9 L732.1 322.4 M738.2 325.8 L732.1 322.4" stroke="#007878" stroke-width="1.05" fill="none"/>
<path d="M781.6 341.5 L734.3 337.0 M740.9 334.7 L734.3 337.0 M740.4 340.6 L734.3 337.0" stroke="#007878" stroke-width="1.05" fill="none"/>
<path d="M840.1 445.1 L849.1 429.3 M848.6 435.3 L849.1 429.3 M844.2 432.8 L849.1 429.3" stroke="#007878" stroke-width="1.05" fill="none"/>
<path d="M882.9 272.9 L877.3 263.9 M882.3 267.2 L877.3 263.9 M878.0 269.8 L877.3 263.9" stroke="#007878" stroke-width="1.05" fill="none"/>
<path d="M887.3 354.3 L1004.3 328.4 L1031.3 345.3 M925.5 358.8 L1031.3 345.3 M935.7 334.0 L916.5 392.5 L896.3 448.8 L878.3 514.1 M876.0 354.3 L1074.1 424.0 M914.3 374.5 L1011.1 410.5 L1065.1 424.0" stroke="#8a5208" stroke-width="1.536" fill="none" stroke-linejoin="round" />
<path d="M1004.3 328.4 C1006.6 328.8 1013.9 328.9 1017.8 330.6 C1021.7 332.4 1025.7 336.5 1027.9 339.0 C1030.2 341.4 1030.7 344.2 1031.3 345.3" stroke="#8a5208" stroke-width="1.44" fill="none" />
<path d="M1032.4 345.3 C1034.1 345.6 1039.0 346.0 1042.6 347.5 C1046.1 349.0 1051.0 352.0 1053.8 354.3 C1056.6 356.5 1058.5 359.9 1059.4 361.0" stroke="#8a5208" stroke-width="1.44" fill="none" />
<path d="M1074.1 424.0 C1076.0 424.8 1080.1 424.8 1085.3 428.5 C1090.6 432.3 1100.3 440.9 1105.6 446.6 C1110.8 452.2 1115.0 459.7 1116.8 462.3" stroke="#8a5208" stroke-width="1.44" fill="none" />
<path d="M951.4 286.8 L935.7 334.0 M934.6 325.1 L935.7 334.0 M941.8 327.5 L935.7 334.0" stroke="#007878" stroke-width="1.05" fill="none"/>
<path d="M1035.8 336.3 L1013.3 323.9 M1021.3 324.4 L1013.3 323.9 M1018.0 330.3 L1013.3 323.9" stroke="#007878" stroke-width="1.05" fill="none"/>
<path d="M1049.3 415.0 L936.8 368.9 M944.8 368.5 L936.8 368.9 M942.2 374.8 L936.8 368.9" stroke="#007878" stroke-width="1.05" fill="none"/>
<path d="M1026.8 402.7 L984.0 377.9 M991.0 378.5 L984.0 377.9 M988.1 383.6 L984.0 377.9" stroke="#007878" stroke-width="1.05" fill="none"/>
<path d="M997.6 403.8 L961.5 383.5 M968.5 384.1 L961.5 383.5 M965.6 389.2 L961.5 383.5" stroke="#007878" stroke-width="1.05" fill="none"/>
<path d="M1026.8 482.6 L1051.6 454.4 M1049.0 463.1 L1051.6 454.4 M1043.3 458.0 L1051.6 454.4" stroke="#007878" stroke-width="1.05" fill="none"/>
<path d="M1056.1 487.1 L1080.8 461.2 M1077.9 469.7 L1080.8 461.2 M1072.4 464.4 L1080.8 461.2" stroke="#007878" stroke-width="1.05" fill="none"/>
<path d="M1026.8 482.6 L1042.6 466.8 M1040.2 473.4 L1042.6 466.8 M1036.0 469.2 L1042.6 466.8" stroke="#007878" stroke-width="1.05" fill="none"/>
<path d="M1056.1 487.1 L1071.8 472.4 M1069.2 478.9 L1071.8 472.4 M1065.2 474.6 L1071.8 472.4" stroke="#007878" stroke-width="1.05" fill="none"/>
<path d="M968.3 503.9 L1029.1 491.6 M1023.4 495.7 L1029.1 491.6 M1022.3 489.9 L1029.1 491.6" stroke="#007878" stroke-width="1.05" fill="none"/>
<path d="M988.5 511.8 L1105.6 501.7 M1099.5 505.2 L1105.6 501.7 M1099.0 499.3 L1105.6 501.7" stroke="#007878" stroke-width="1.05" fill="none"/>
<path d="M840.0 331.8 L858.0 334.0 M852.3 335.9 L858.0 334.0 M852.9 330.8 L858.0 334.0" stroke="#007878" stroke-width="1.05" fill="none"/>
<path d="M633.0 463.9 L664.6 472.9 L869.4 532.5 L891.9 586.6 M629.7 526.9 L761.3 499.9 L900.0 468.4 M666.8 498.8 L900.0 451.5 M676.9 436.9 L817.6 471.8 L900.0 494.3 M827.7 655.0 L835.6 631.6 L900.0 451.5 M633.0 463.9 L654.4 519.0 M876.1 566.3 L891.9 566.3 L885.1 579.8 M496.9 432.4 L520.5 434.6 M480.0 539.3 L536.3 510.0 M556.5 537.0 L583.5 538.2" stroke="#8a5208" stroke-width="1.536" fill="none" stroke-linejoin="round" />
<path d="M675.8 440.3 C674.7 443.3 670.9 451.9 669.1 458.3 C667.2 464.6 665.2 471.8 664.6 478.5 C663.9 485.3 663.9 493.5 665.0 498.8 C666.1 504.0 666.5 507.6 671.3 510.0 C676.1 512.5 690.1 512.8 693.8 513.4" stroke="#8a5208" stroke-width="1.632" fill="none" />
<path d="M665.0 498.8 C666.8 500.5 671.8 506.7 675.8 508.9 C679.9 511.2 687.1 511.7 689.3 512.3" stroke="#8a5208" stroke-width="1.44" fill="none" />
<path d="M657.8 444.8 L696.1 463.9 M688.1 463.7 L696.1 463.9 M691.1 457.6 L696.1 463.9" stroke="#007878" stroke-width="1.05" fill="none"/>
<path d="M675.8 444.8 L740.0 481.9 M732.0 481.2 L740.0 481.9 M735.4 475.3 L740.0 481.9" stroke="#007878" stroke-width="1.05" fill="none"/>
<path d="M699.4 443.6 L761.3 479.0 M753.4 478.3 L761.3 479.0 M756.7 472.4 L761.3 479.0" stroke="#007878" stroke-width="1.05" fill="none"/>
<path d="M900.0 515.7 L837.9 510.0 M845.4 507.3 L837.9 510.0 M844.8 514.1 L837.9 510.0" stroke="#007878" stroke-width="1.05" fill="none"/>
<path d="M849.1 436.9 L844.6 430.1 M849.7 433.2 L844.6 430.1 M845.5 436.1 L844.6 430.1" stroke="#007878" stroke-width="1.05" fill="none"/>
<path d="M863.7 571.9 L853.6 578.7 M857.3 572.7 L853.6 578.7 M860.5 577.6 L853.6 578.7" stroke="#007878" stroke-width="1.05" fill="none"/>
<path d="M1031.6 442.9 C1035.1 442.2 1046.4 439.5 1053.1 438.6 C1059.9 437.8 1064.6 435.7 1072.1 437.8 C1079.5 439.8 1091.6 444.5 1097.9 450.7 C1104.3 456.9 1107.7 466.8 1110.0 474.8 C1112.3 482.9 1112.6 491.5 1111.7 499.0 C1110.9 506.4 1108.3 513.0 1104.8 519.7 C1101.4 526.3 1095.3 533.2 1091.0 538.6 C1086.7 544.1 1081.0 550.1 1079.0 552.4" stroke="#8a5208" stroke-width="1.632" fill="none" />
<path d="M1003.1 461.9 C1005.7 464.6 1014.5 472.1 1018.6 478.3 C1022.8 484.5 1026.2 492.1 1028.1 499.0 C1030.0 505.9 1030.0 512.8 1029.8 519.7 C1029.7 526.6 1029.1 534.0 1027.2 540.3 C1025.4 546.7 1022.4 553.0 1018.6 557.6 C1014.9 562.2 1007.1 566.2 1004.8 567.9" stroke="#8a5208" stroke-width="1.632" fill="none" />
<path d="M1013.4 458.4 C1016.3 460.9 1026.1 467.2 1030.7 473.1 C1035.3 479.0 1038.9 486.6 1041.0 493.8 C1043.2 501.0 1043.6 509.0 1043.6 516.2 C1043.6 523.4 1042.9 530.6 1041.0 536.9 C1039.2 543.2 1036.1 549.0 1032.4 554.1 C1028.7 559.3 1022.6 564.5 1018.6 567.9 C1014.6 571.4 1010.0 573.7 1008.3 574.8" stroke="#8a5208" stroke-width="1.536" fill="none" />
<path d="M1025.5 455.9 C1028.4 458.4 1038.2 465.6 1042.8 471.4 C1047.4 477.1 1050.7 483.4 1053.1 490.3 C1055.5 497.2 1057.0 505.6 1057.4 512.8 C1057.8 519.9 1057.3 526.6 1055.7 533.4 C1054.1 540.3 1051.5 548.1 1047.9 554.1 C1044.3 560.2 1038.7 565.9 1034.1 569.7 C1029.5 573.4 1022.6 575.4 1020.3 576.6" stroke="#8a5208" stroke-width="1.536" fill="none" />
<path d="M1029.0 512.8 C1029.1 511.6 1029.3 508.4 1029.8 505.9 C1030.4 503.3 1030.8 499.4 1032.4 497.2 C1034.0 495.1 1036.7 493.4 1039.3 492.9 C1041.9 492.5 1045.3 493.1 1047.9 494.7 C1050.5 496.2 1053.1 499.4 1054.8 502.4 C1056.6 505.4 1057.8 508.7 1058.3 512.8 C1058.7 516.8 1058.3 522.0 1057.4 526.6 C1056.6 531.1 1053.8 538.0 1053.1 540.3" stroke="#8a5208" stroke-width="1.536" fill="none" />
<path d="M1042.8 499.0 C1043.6 497.8 1045.8 493.6 1047.9 492.1 C1050.1 490.5 1052.8 489.3 1055.7 489.5 C1058.6 489.6 1062.4 490.8 1065.2 492.9 C1067.9 495.1 1070.5 498.5 1072.1 502.4 C1073.6 506.3 1074.2 513.9 1074.7 516.2" stroke="#8a5208" stroke-width="1.536" fill="none" />
<path d="M1057.4 495.5 C1058.1 494.5 1059.6 490.9 1061.7 489.5 C1063.9 488.0 1067.5 486.8 1070.3 486.9 C1073.2 487.0 1076.4 488.0 1079.0 490.3 C1081.6 492.6 1084.4 496.7 1085.9 500.7 C1087.3 504.7 1087.3 512.2 1087.6 514.5" stroke="#8a5208" stroke-width="1.536" fill="none" />
<path d="M1057.4 530.9 C1059.9 531.3 1066.5 534.2 1072.1 533.4 C1077.7 532.7 1085.9 528.9 1091.0 526.6 C1096.2 524.3 1101.1 520.8 1103.1 519.7" stroke="#8a5208" stroke-width="1.536" fill="none" />
<path d="M1042.8 542.1 C1045.1 542.5 1050.8 544.8 1056.6 544.7 C1062.3 544.5 1071.5 543.1 1077.2 541.2 C1083.0 539.3 1088.7 534.7 1091.0 533.4" stroke="#8a5208" stroke-width="1.44" fill="none" />
<path d="M1087.6 430.0 C1089.9 431.7 1097.4 436.3 1101.4 440.3 C1105.4 444.4 1109.1 450.7 1111.7 454.1 C1114.3 457.6 1116.0 459.9 1116.9 461.0" stroke="#8a5208" stroke-width="1.248" fill="none" />
<path d="M1029.8 505.9 L1028.1 536.9 M1043.6 505.9 L1041.9 540.3 L1037.6 547.2 M1058.3 512.8 L1056.6 540.3 L1042.8 602.4 M1074.7 516.2 L1056.6 602.4 M1087.6 514.5 L1080.7 550.7 L1068.6 598.1 M1044.5 514.5 L1072.1 510.2 L1087.6 505.9 M1029.0 505.9 L1049.7 502.4 M1060.0 524.0 L1087.6 517.9 M960.0 459.3 L1013.4 447.2 L1070.3 436.9 M960.0 435.2 L1003.1 461.9 M980.7 430.0 L1013.4 458.4 M991.0 430.0 L1025.5 455.9 M960.0 440.3 L987.6 454.1 L1025.5 455.9 M960.0 531.7 L1042.8 602.4 M960.0 545.5 L1035.9 602.4 M977.2 557.6 L1056.6 600.7 M982.4 567.9 L1004.8 567.9 M992.8 571.4 L1018.6 567.9 M1004.8 580.0 L1029.0 575.7 M960.0 555.9 L982.4 567.9 M960.0 501.6 L1053.1 529.1 M960.0 519.7 L1079.0 552.4 M1042.8 542.1 L1054.0 529.1 M963.4 523.1 L982.4 557.6 M1031.6 442.9 L1041.0 431.7 L1072.1 437.8 M1079.0 552.4 L1130.0 567.9" stroke="#8a5208" stroke-width="1.536" fill="none" stroke-linejoin="round" />
<path d="M907.5 420.0 L862.5 555.0 L846.8 600.1 M907.5 420.0 L979.5 555.0 M869.3 532.5 L896.3 602.3 M840.0 568.5 L882.8 568.5 L890.6 586.6 M880.5 564.0 L887.3 577.6" stroke="#8a5208" stroke-width="1.536" fill="none" stroke-linejoin="round" />
<path d="M1026.8 481.9 L1049.3 454.9 M1047.0 463.6 L1049.3 454.9 M1041.2 458.7 L1049.3 454.9" stroke="#007878" stroke-width="1.05" fill="none"/>
<path d="M1056.1 487.5 L1078.6 460.5 M1076.3 469.2 L1078.6 460.5 M1070.4 464.3 L1078.6 460.5" stroke="#007878" stroke-width="1.05" fill="none"/>
<path d="M1026.8 481.9 L1038.1 468.4 M1036.3 475.2 L1038.1 468.4 M1031.7 471.4 L1038.1 468.4" stroke="#007878" stroke-width="1.05" fill="none"/>
<path d="M1056.1 487.5 L1069.6 474.0 M1067.2 480.6 L1069.6 474.0 M1063.0 476.4 L1069.6 474.0" stroke="#007878" stroke-width="1.05" fill="none"/>
<path d="M968.3 503.3 L1029.1 492.0 M1022.5 496.7 L1029.1 492.0 M1021.3 490.0 L1029.1 492.0" stroke="#007878" stroke-width="1.05" fill="none"/>
<path d="M988.5 513.4 L1105.6 502.2 M1098.7 506.2 L1105.6 502.2 M1098.0 499.5 L1105.6 502.2" stroke="#007878" stroke-width="1.05" fill="none"/>
<path d="M954.8 519.0 L993.0 523.1 M985.5 525.7 L993.0 523.1 M986.2 519.0 L993.0 523.1" stroke="#007878" stroke-width="1.05" fill="none"/>
<path d="M901.9 515.7 L840.0 510.0 M847.5 507.3 L840.0 510.0 M846.9 514.1 L840.0 510.0" stroke="#007878" stroke-width="1.05" fill="none"/>
<path d="M863.6 573.0 L854.6 578.7 M858.4 572.8 L854.6 578.7 M861.6 577.8 L854.6 578.7" stroke="#007878" stroke-width="1.05" fill="none"/>
<path d="M636.1 760.0 L714.5 946.7 M639.8 760.0 L736.9 954.2 M653.5 760.0 L774.3 1012.7 L799.2 959.2 L871.3 774.9 M695.8 771.2 L670.9 864.6 L714.5 946.7 L789.2 931.8 M670.9 864.6 L739.4 847.1 L759.3 842.2 M724.5 772.4 L702.1 827.2 L736.9 954.2 L821.6 906.9 L755.6 779.9 M744.4 772.4 L699.6 914.3 L791.7 939.2 M702.1 827.2 L739.4 859.6 M674.7 768.7 L744.4 772.4 L799.2 803.6 M714.5 772.4 L754.3 864.6 L789.2 944.2 M704.6 772.4 L774.3 919.3 M789.2 774.9 L709.5 899.4 M819.1 799.8 L739.4 931.8 M836.5 794.9 L774.3 919.3 M848.9 792.4 L819.1 909.4 L804.1 959.2 M871.3 774.9 L839.0 877.0 L824.0 934.3 M900.0 826.0 L734.4 931.8 M900.0 779.9 L759.3 889.4 M900.0 784.9 L771.8 899.4 M744.4 931.8 L791.7 1019.9 M759.3 842.2 L806.6 877.0 L814.1 899.4 M670.9 864.6 L759.3 889.4 M697.1 914.3 L774.3 934.3 M717.0 946.7 L789.2 931.8 M886.3 784.9 L871.3 774.9 L900.0 765.0 M868.9 772.4 L883.8 787.4" stroke="#8a5208" stroke-width="1.3439999999999999" fill="none" stroke-linejoin="round" />
<ellipse cx="657.3" cy="893.2" rx="31" ry="8.7" transform="rotate(10 657.3 893.2)" fill="none" stroke="#8a5208" stroke-width="1.1199999999999999" />
<ellipse cx="664.7" cy="909.4" rx="24" ry="27" transform="rotate(-20 664.7 909.4)" fill="none" stroke="#8a5208" stroke-width="1.1199999999999999" />
<ellipse cx="751.9" cy="874.5" rx="32" ry="17" transform="rotate(-15 751.9 874.5)" fill="none" stroke="#8a5208" stroke-width="1.1199999999999999" />
<ellipse cx="786.7" cy="884.5" rx="25" ry="27" transform="rotate(0 786.7 884.5)" fill="none" stroke="#8a5208" stroke-width="1.1199999999999999" />
<ellipse cx="791.7" cy="946.7" rx="30" ry="17" transform="rotate(-15 791.7 946.7)" fill="none" stroke="#8a5208" stroke-width="1.1199999999999999" />
<ellipse cx="819" cy="940.5" rx="31" ry="9" transform="rotate(15 819 940.5)" fill="none" stroke="#8a5208" stroke-width="1.1199999999999999" />
<path d="M657.3 889.4 L639.8 939.2 M639.0 931.3 L639.8 939.2 M645.4 933.5 L639.8 939.2" stroke="#007878" stroke-width="1.05" fill="none"/>
<path d="M819.1 940.5 L804.1 986.5 M803.2 978.6 L804.1 986.5 M809.6 980.7 L804.1 986.5" stroke="#007878" stroke-width="1.05" fill="none"/>
<path d="M786.7 777.4 L773.0 823.5 M771.8 815.6 L773.0 823.5 M778.3 817.5 L773.0 823.5" stroke="#007878" stroke-width="1.05" fill="none"/>
<path d="M769.3 789.9 L760.6 832.2 M758.7 824.4 L760.6 832.2 M765.3 825.8 L760.6 832.2" stroke="#007878" stroke-width="1.05" fill="none"/>
<path d="M657.3 889.4 L643.6 929.3 M642.8 922.3 L643.6 929.3 M648.4 924.2 L643.6 929.3" stroke="#007878" stroke-width="1.05" fill="none"/>
<path d="M819.1 940.5 L806.6 979.1 M805.8 972.1 L806.6 979.1 M811.4 973.9 L806.6 979.1" stroke="#007878" stroke-width="1.05" fill="none"/>
<path d="M749.4 874.5 L769.3 914.3" stroke="#007878" stroke-width="1.1" fill="none" stroke-linejoin="round" />
<path d="M786.7 884.5 L771.8 898.2" stroke="#007878" stroke-width="1.1" fill="none" stroke-linejoin="round" />
<path d="M770.3 619.1 L720.8 768.8 L675.8 834.1 M846.9 600.0 L786.1 777.8 M673.6 767.7 L754.6 726.0 L756.8 722.7 M755.7 724.9 L797.4 803.7 M673.6 767.7 L745.6 773.3 L797.4 803.7 M797.4 803.7 L900.0 712.5 M696.1 771.1 L675.8 834.1 M705.1 771.1 L732.1 834.1 M725.3 772.2 L705.1 827.3 L714.1 835.0 M745.6 775.6 L734.3 835.0 M759.1 780.1 L799.6 835.0 M817.6 802.6 L804.1 835.0 M846.9 795.8 L831.1 835.0 M900.0 777.8 L840.1 835.0 M900.0 786.8 L745.6 835.0 M876.1 771.1 L862.6 835.0 M876.1 771.1 L900.0 786.8 M705.1 827.3 L790.6 780.1" stroke="#8a5208" stroke-width="1.44" fill="none" stroke-linejoin="round" />
<path d="M778.2 621.4 L745.6 773.3" stroke="#d0d0d0" stroke-width="1" fill="none" stroke-linejoin="round" />
<path d="M815.4 751.9 L826.6 757.6 M819.9 755.3 L831.1 748.5 M824.4 758.7 L835.6 748.5 M831.1 755.3 L842.4 747.4 L849.1 754.2 M813.1 753.0 L849.1 755.3" stroke="#007878" stroke-width="0.9" fill="none" stroke-linejoin="round" />
<ellipse cx="836" cy="473.9" rx="174.6" ry="66.7" transform="rotate(11.9 836 473.9)" fill="none" stroke="#8a5208" stroke-width="1.52" />
<path d="M665.3 499.0 L836.6 467.9 L1060.0 431.1 M640.0 525.4 L800.9 490.9 L938.9 462.2 L1060.0 438.0 M681.4 435.7 L836.6 477.1 L961.8 513.9 L1060.0 543.8 M676.8 440.3 L899.8 495.5 L1030.8 532.3 M805.5 513.9 L836.6 473.7 L869.9 426.6 L936.6 330.0 M757.2 353.0 L836.6 473.7 L872.2 532.3 L888.3 570.0 M800.9 376.0 L836.6 473.7 L860.7 536.9 M932.0 336.9 L892.9 454.1 L858.4 570.0 M851.5 380.6 L892.9 454.1 L950.3 570.0 M851.5 380.6 L821.6 477.1 L805.5 513.9 M672.2 386.3 L798.6 366.8 L869.9 353.0 M688.3 396.7 L851.5 381.7 L934.3 364.5 M736.6 405.9 L927.4 371.4 M640.0 355.3 L800.9 426.6 L899.8 465.6 L1060.0 520.8 M653.8 376.0 L814.7 458.7 L936.6 520.8 M869.9 353.0 L1060.0 405.9 M927.4 371.4 L1060.0 419.7 M892.9 454.1 L1060.0 412.8 M640.0 411.6 L836.6 473.7 M715.9 408.2 L836.6 467.9 M754.9 426.6 L777.9 405.9 L798.6 366.8 M899.8 465.6 L938.9 477.1 L934.3 495.5 M869.9 532.3 L911.3 570.0 M915.9 387.5 L984.8 431.1 L1030.8 444.9" stroke="#8a5208" stroke-width="1.536" fill="none" stroke-linejoin="round" />
<polygon points="554.6,303.0 563.2,290.1 571.8,285.1 581.9,284.4 591.9,288.7 599.1,297.3 601.3,305.9 599.1,314.6 594.8,320.3 591.9,323.2 589.8,313.1 583.3,304.5 573.2,298.0 563.2,298.0" fill="url(#gA)" stroke="#8a5208" stroke-width="1.4" stroke-linejoin="round" />
<polygon points="591.9,323.2 587.6,339.0 586.2,353.4 587.6,367.7 591.9,382.1 596.2,395.0 587.6,408.0 581.9,396.5 576.8,376.4 576.4,356.2 580.4,341.9 587.6,330.4" fill="#464646" stroke="#8a5208" stroke-width="1.4" stroke-linejoin="round" />
<polygon points="533.7,392.9 545.2,327.5 549.5,311.7 554.6,303.0 563.2,298.0 573.2,298.0 583.3,304.5 589.8,313.1 591.9,321.7 587.6,330.4 580.4,341.9 576.4,356.2 576.8,376.4 581.9,396.5 586.2,408.0" fill="#1e1e1e" stroke="#8a5208" stroke-width="1.4" stroke-linejoin="round" />
<polygon points="619.6,430.2 603.1,512.2 629.0,527.3 646.9,446.0" fill="url(#gF2)" stroke="#8a5208" stroke-width="1.4" stroke-linejoin="round" />
<polygon points="619.6,430.2 623.2,421.6 631.9,411.6 641.9,407.2 647.7,410.1 669.9,422.8 660.6,425.9 652.0,433.1 646.9,443.2 646.9,446.0" fill="url(#gF)" stroke="#8a5208" stroke-width="1.4" stroke-linejoin="round" />
<polygon points="646.9,443.2 652.0,433.1 660.6,425.9 669.9,422.8 675.0,427.4 677.1,434.6 676.4,440.3 670.7,453.2 665.6,466.2 663.5,479.1 663.5,493.5 664.9,507.8 667.8,517.9 630.4,527.3 639.0,482.0" fill="#363636" stroke="#8a5208" stroke-width="1.4" stroke-linejoin="round" />
<polygon points="1117.7,460.9 1122.0,453.7 1130.6,448.0 1140.7,447.0 1150.7,450.8 1157.9,458.7 1161.1,468.8 1160.1,477.4 1150.0,484.6 1150.0,477.4 1147.1,471.0 1139.2,463.8 1127.7,460.5" fill="url(#gD)" stroke="#8a5208" stroke-width="1.4" stroke-linejoin="round" />
<polygon points="1150.0,484.6 1160.1,477.4 1156.5,494.7 1152.2,516.2 1149.3,533.5 1145.7,552.2 1141.4,573.7 1132.8,566.5 1139.2,536.4 1145.0,510.5" fill="#484848" stroke="#8a5208" stroke-width="1.4" stroke-linejoin="round" />
<polygon points="1078.9,552.2 1091.8,539.2 1101.9,524.9 1108.3,510.5 1111.2,494.7 1109.8,478.9 1111.9,470.2 1117.7,463.1 1127.7,460.5 1139.2,463.8 1147.1,471.0 1150.0,477.4 1150.0,484.6 1145.0,510.5 1139.2,536.4 1132.8,566.5" fill="#1e1e1e" stroke="#8a5208" stroke-width="1.4" stroke-linejoin="round" />
<polygon points="911.8,493.7 906.8,499.4 903.9,510.9 901.0,532.5 896.0,552.6 890.2,568.4 884.5,579.9 889.5,590.0 897.4,604.3 906.8,561.2 914.7,525.3 916.8,512.4 916.1,500.9 914.0,494.4" fill="#686868" stroke="#8a5208" stroke-width="1.4" stroke-linejoin="round" />
<polygon points="914.0,493.7 947.7,496.6 951.3,500.2 952.8,508.1 952.3,525.3 946.3,552.6 940.5,578.5 934.8,607.9 897.4,605.1 906.8,561.2 914.7,525.3 916.8,512.4 916.1,500.9" fill="#272727" stroke="#8a5208" stroke-width="1.4" stroke-linejoin="round" />
<polygon points="914.0,493.7 947.7,496.6 951.3,500.2 952.8,508.1 952.3,527.5 915.0,524.8 916.8,512.4 916.1,500.9" fill="url(#gE)" stroke="#8a5208" stroke-width="1.4" stroke-linejoin="round" />
<g id="dashfront">
<path d="M1462.0 627.0 L815.0 753.0 L198.0 392.0" stroke="#006c6c" stroke-width="1.0" fill="none" stroke-dasharray="6.5 7.5"/>
<path d="M598.6 160.0 L424.0 986.0" stroke="#006c6c" stroke-width="1.0" fill="none" stroke-dasharray="6.5 7.5"/>
</g>
<path d="M576.8 320.2 L556.5 333.7 M560.7 326.8 L556.5 333.7 M564.4 332.5 L556.5 333.7" stroke="#007878" stroke-width="1.0" fill="none"/>
<path d="M574.5 319.0 L566.7 324.0 M569.9 318.9 L566.7 324.0 M572.6 323.2 L566.7 324.0" stroke="#007878" stroke-width="1.0" fill="none"/>
<path d="M663.5 472.6 L631.9 463.3 L654.1 518.6 M663.5 472.6 L750.0 494.9" stroke="#8a5208" stroke-width="1.44" fill="none" stroke-linejoin="round" />
<path d="M428.7 958.0 L437.5 965.5 M437.5 958.0 L428.7 965.5 M434.0 967.0 L427.0 968.5 L426.0 972.0 L432.0 973.0 L431.0 977.0 L425.0 977.5 M424.0 979.0 L423.0 988.0 M428.0 978.5 L427.0 987.5 M422.0 982.0 L430.0 981.0 M421.5 985.5 L429.5 984.5" stroke="#007878" stroke-width="0.9" fill="none" stroke-linejoin="round" />
<path d="M1240.0 345.0 L1290.4 447.2" stroke="#8a5208" stroke-width="1.248" fill="none" stroke-linejoin="round" />
<path d="M1047.0 685.0 L1080.0 748.0" stroke="#8a5208" stroke-width="0.96" fill="none" stroke-linejoin="round" stroke-dasharray="1 1.5"/>
<path d="M1031.0 653.0 L1084.0 752.0" stroke="#8a5208" stroke-width="1.392" fill="none" stroke-linejoin="round" />
<path d="M791.7 1020.0 L803.5 1042.0" stroke="#8a5208" stroke-width="1.392" fill="none" stroke-linejoin="round" />
<ellipse cx="889.5" cy="229" rx="317.4" ry="120.0" transform="rotate(11.9 889.5 229)" fill="none" stroke="#ffffff" stroke-width="1.6" />
<path d="M889.0 230.0 L836.0 472.0" stroke="#f4fff4" stroke-width="1.4" fill="none" />
</g>
<g id="axes">
<path d="M59.6 983.7 L24.4 963.8" stroke="#00ff00" stroke-width="2.0" fill="none" />
<path d="M33.5 961.6 L24.4 963.8 L30.7 974.6" stroke="#00ff00" stroke-width="2.0" fill="none" />
<path d="M59.6 983.7 L95.5 976.3" stroke="#ff0000" stroke-width="2.0" fill="none" />
<path d="M82.4 975.0 L95.5 976.3 L92.0 981.7" stroke="#ff0000" stroke-width="2.0" fill="none" />
<path d="M59.6 983.7 L69.2 938.1" stroke="#0000ff" stroke-width="2.0" fill="none" />
<path d="M62.0 948.8 L69.2 938.1 L72.4 947.1" stroke="#0000ff" stroke-width="2.0" fill="none" />
</g>
<!--VIEW-END-->
</svg>

<div id="menubar">
<span style="left:8.2px;transform:scaleX(0.9187)">File</span>
<span style="left:45px;transform:scaleX(0.9669)">Edit</span>
<span style="left:83.7px;transform:scaleX(0.9749)">View</span>
<span style="left:128px;transform:scaleX(1.0069)">New Group</span>
<span style="left:213px;transform:scaleX(0.9872)">Sketch</span>
<span style="left:270px;transform:scaleX(0.9952)">Constrain</span>
<span style="left:343.8px;transform:scaleX(0.9827)">Analyze</span>
<span style="left:408px;transform:scaleX(1.0353)">Help</span>
</div>

<div id="toolbar">
<div class="sep" style="top:202px"></div>
<div class="sep" style="top:410px"></div>
<div class="sep" style="top:586px"></div>
<svg width="66" height="636" viewBox="0 60 66 636">
<!--TOOLS-START-->
<path d="M7.5 89.5 L26.5 71.5" stroke="#ffffff" stroke-width="1.1" fill="none" />
<rect x="5.80" y="87.80" width="3.4" height="3.4" fill="#00e000"/>
<rect x="24.80" y="69.80" width="3.4" height="3.4" fill="#00e000"/>
<rect x="40.5" y="73.5" width="17.5" height="13.5" fill="none" stroke="#ffffff" stroke-width="1.1"/>
<rect x="39.00" y="72.00" width="3" height="3" fill="#00e000"/>
<rect x="56.50" y="72.00" width="3" height="3" fill="#00e000"/>
<rect x="39.00" y="85.50" width="3" height="3" fill="#00e000"/>
<rect x="56.50" y="85.50" width="3" height="3" fill="#00e000"/>
<circle cx="17" cy="112" r="9.6" fill="none" stroke="#ffffff" stroke-width="1.1"/>
<rect x="15.20" y="110.20" width="3.6" height="3.6" fill="#00e000"/>
<path d="M58.5 112.5 A9.6 9.6 0 1 0 49.3 121.7" stroke="#ffffff" stroke-width="1.1" fill="none" />
<rect x="47.20" y="110.20" width="3.6" height="3.6" fill="#00e000"/>
<rect x="57.00" y="111.00" width="3" height="3" fill="#00e000"/>
<rect x="47.80" y="120.20" width="3" height="3" fill="#00e000"/>
<path d="M7.5 154.5 L15.3 134.5 L18.7 134.5 L26.5 154.5 L23.2 154.5 L21.2 149 L12.8 149 L10.8 154.5 Z M13.8 146.3 L20.2 146.3 L17 137.5 Z" stroke="#ffffff" stroke-width="1" fill="none" />
<rect x="39.5" y="137" width="19" height="14.5" fill="#202020" stroke="#ffffff" stroke-width="1.2"/>
<path d="M41 150 L41 148 L45.5 142.5 L48.5 146 L51 144 L56.5 148 L56.5 150 Z" stroke="none" stroke-width="0" fill="#8a8a8a" />
<circle cx="54" cy="141" r="1.5" fill="#8a8a8a"/>
<rect x="38.00" y="135.50" width="3" height="3" fill="#00e000"/>
<rect x="57.00" y="135.50" width="3" height="3" fill="#00e000"/>
<rect x="38.00" y="150.00" width="3" height="3" fill="#00e000"/>
<rect x="57.00" y="150.00" width="3" height="3" fill="#00e000"/>
<path d="M8.7 185.2 L12.5 176.2 C15.5 167 21 167 24.3 176.2 L27.7 186.5" stroke="#ffffff" stroke-width="1.1" fill="none" />
<rect x="11.00" y="174.70" width="3" height="3" fill="#00e000"/>
<rect x="22.80" y="174.70" width="3" height="3" fill="#00e000"/>
<path d="M6.2 168 H11.2 M8.7 168 V173.3" stroke="#ff19ff" stroke-width="1.1" fill="none" />
<path d="M58.7 166.7 C40 170 45 176 50 177.5 C58 180.5 50 185 39.5 185.5" stroke="#ffffff" stroke-width="1.1" fill="none" />
<rect x="57.20" y="165.20" width="3" height="3" fill="#00e000"/>
<rect x="38.00" y="184.00" width="3" height="3" fill="#00e000"/>
<rect x="13.90" y="204.90" width="6.2" height="6.2" fill="#00e000"/>
<circle cx="46.5" cy="204.5" r="6.5" fill="none" stroke="#00e000" stroke-width="1.1"/>
<rect x="45.00" y="203.00" width="3" height="3" fill="#00e000"/>
<path d="M39.5 217.5 L58.7 212.6" stroke="#00e000" stroke-width="1.1" fill="none" />
<rect x="38.00" y="216.00" width="3" height="3" fill="#00e000"/>
<rect x="57.20" y="211.10" width="3" height="3" fill="#00e000"/>
<path d="M7.5 234.2 L26.3 243.3" stroke="#ffffff" stroke-width="1.1" fill="none" />
<path d="M24.3 232.5 L9.5 247.5" stroke="#ffffff" stroke-width="1.1" fill="none" />
<rect x="6.00" y="232.70" width="3" height="3" fill="#00e000"/>
<rect x="24.80" y="241.80" width="3" height="3" fill="#00e000"/>
<rect x="22.80" y="231.00" width="3" height="3" fill="#00e000"/>
<rect x="8.00" y="246.00" width="3" height="3" fill="#00e000"/>
<rect x="15.50" y="238.10" width="3" height="3" fill="#00e000"/>
<text x="6.8" y="285.4" font-family="Liberation Sans,sans-serif" font-size="9.2" fill="#ff19ff" textLength="20.5" lengthAdjust="spacingAndGlyphs">2.54</text>
<path d="M7.4 289.5 H26.8 M7.4 287.3 V291.7 M26.8 287.3 V291.7" stroke="#ff19ff" stroke-width="1.1" fill="none" />
<path d="M7.4 294.4 L26.6 294.4" stroke="#ffffff" stroke-width="1.1" fill="none" />
<rect x="5.90" y="292.90" width="3" height="3" fill="#00e000"/>
<rect x="25.10" y="292.90" width="3" height="3" fill="#00e000"/>
<path d="M42.6 279 L39.4 297.5 L58.4 294.1" stroke="#ffffff" stroke-width="1.1" fill="none" />
<rect x="41.10" y="277.50" width="3" height="3" fill="#00e000"/>
<rect x="37.90" y="296.00" width="3" height="3" fill="#00e000"/>
<rect x="56.90" y="292.60" width="3" height="3" fill="#00e000"/>
<path d="M41.6 288 A9.6 9.6 0 0 1 49.2 295.7" stroke="#ff19ff" stroke-width="1.1" fill="none" />
<text x="45.2" y="286.4" font-family="Liberation Sans,sans-serif" font-size="8.8" fill="#ff19ff" textLength="15.5" lengthAdjust="spacingAndGlyphs">74°</text>
<path d="M13.9 314.6 V320.8 M19.9 314.6 V320.8 M13.9 317.6 H19.9" stroke="#ff19ff" stroke-width="1.1" fill="none" />
<path d="M7.4 324.4 L26.6 324.4" stroke="#ffffff" stroke-width="1.1" fill="none" />
<rect x="5.90" y="322.90" width="3" height="3" fill="#00e000"/>
<rect x="25.10" y="322.90" width="3" height="3" fill="#00e000"/>
<path d="M44.3 310.6 L44.3 329.6" stroke="#ffffff" stroke-width="1.1" fill="none" />
<rect x="42.80" y="309.10" width="3" height="3" fill="#00e000"/>
<rect x="42.80" y="328.10" width="3" height="3" fill="#00e000"/>
<path d="M48.6 316.6 L51.9 323.3 L55.2 316.6" stroke="#ff19ff" stroke-width="1.1" fill="none" />
<path d="M7.4 350.6 L26.8 347.1" stroke="#ffffff" stroke-width="1.1" fill="none" />
<path d="M7.4 357.4 L26.8 354.2" stroke="#ffffff" stroke-width="1.1" fill="none" />
<rect x="5.90" y="349.10" width="3" height="3" fill="#00e000"/>
<rect x="25.30" y="345.60" width="3" height="3" fill="#00e000"/>
<rect x="5.90" y="355.90" width="3" height="3" fill="#00e000"/>
<rect x="25.30" y="352.70" width="3" height="3" fill="#00e000"/>
<path d="M39.4 346.4 L39.4 361.6 L58.4 361.6" stroke="#ffffff" stroke-width="1.1" fill="none" />
<rect x="37.90" y="344.90" width="3" height="3" fill="#00e000"/>
<rect x="37.90" y="360.10" width="3" height="3" fill="#00e000"/>
<rect x="56.90" y="360.10" width="3" height="3" fill="#00e000"/>
<path d="M50.6 345.3 V356.3 M44.2 356.3 H57" stroke="#ff19ff" stroke-width="1.1" fill="none" />
<path d="M7.4 382.2 L26.8 374.4" stroke="#ffffff" stroke-width="1.1" fill="none" />
<path d="M16.4 379.7 L23.6 393.4" stroke="#ffffff" stroke-width="1.1" fill="none" />
<rect x="13.3" y="376.6" width="6.3" height="6.3" fill="none" stroke="#ff19ff" stroke-width="1.1"/>
<rect x="5.90" y="380.70" width="3" height="3" fill="#00e000"/>
<rect x="25.30" y="372.90" width="3" height="3" fill="#00e000"/>
<rect x="22.10" y="391.90" width="3" height="3" fill="#00e000"/>
<rect x="14.90" y="378.20" width="3" height="3" fill="#00e000"/>
<path d="M39.4 384.7 H46.8 M43.6 381.6 L46.8 384.7 L43.6 387.8 M59 384.7 H51.6 M54.8 381.6 L51.6 384.7 L54.8 387.8" stroke="#ff19ff" stroke-width="1.1" fill="none" />
<path d="M15.2 407.5 L7.4 425.4 L26.8 423.3 Z" stroke="#ffffff" stroke-width="1.1" fill="none" />
<path d="M8 415 L13.5 418.3 M20.3 416.8 L24.8 413.2 M17 421.5 L17.6 427" stroke="#ff19ff" stroke-width="1.1" fill="none" />
<rect x="13.70" y="406.00" width="3" height="3" fill="#00e000"/>
<rect x="5.90" y="423.90" width="3" height="3" fill="#00e000"/>
<rect x="25.30" y="421.80" width="3" height="3" fill="#00e000"/>
<path d="M40.5 426.5 L45.9 406.4 M41.7 411.5 L45.9 406.4 L48.3 412 M50.6 425.4 L56.5 405.4 M52 410.5 L56.5 405.4 L58.8 411" stroke="#0a8c8c" stroke-width="1.1" fill="none" />
<path d="M6.3 443.3 L27.8 454.3" stroke="#ffffff" stroke-width="1.1" fill="none" />
<path d="M13.1 437 L20.4 458.7" stroke="#ffffff" stroke-width="1.1" fill="none" />
<path d="M9.6 441 C12 436 24 440 23.6 452" stroke="#ff19ff" stroke-width="1.1" fill="none" />
<text x="37.3" y="453" font-family="Liberation Sans,sans-serif" font-size="11.6" fill="#ff19ff" textLength="22.8" lengthAdjust="spacingAndGlyphs">REF</text>
<path d="M7.3 491.4 H21.8 V505.6 H7.3 Z M7.3 491.4 L13 486.3 M21.8 491.4 L26.9 486.3 M21.8 505.6 L26.9 500.2 M8 504.8 L12.3 500.4" stroke="#808080" stroke-width="1.1" fill="none" />
<path d="M13 486.3 H26.9 V500.2" stroke="#ffffff" stroke-width="1.2" fill="none" />
<path d="M12.4 490 V499.3 M13.5 500.3 H25.5" stroke="#ffffff" stroke-width="1.1" fill="none" stroke-dasharray="1.6 1.8"/>
<path d="M40.2 490.1 A8.8 3.8 0 0 1 57.8 490.1 V501.6 A8.8 3.8 0 0 1 40.2 501.6 Z M40.2 490.1 A8.8 3.8 0 0 0 57.8 490.1" stroke="#808080" stroke-width="1.1" fill="none" />
<path d="M42.3 498.7 H52.5" stroke="#808080" stroke-width="1" fill="none" stroke-dasharray="1.6 1.4"/>
<path d="M49.3 490.3 V492.8 M49.3 490.6 L54 493 L54.4 504.3" stroke="#ffffff" stroke-width="1.2" fill="none" />
<path d="M49.3 495.5 V501.5 M50.5 502 L53 503.5" stroke="#ffffff" stroke-width="1.1" fill="none" stroke-dasharray="1.5 1.6"/>
<path d="M15.6 519 L16.1 521.6 C19 522.4 22 522.3 25 522.7 C27 523.5 26 525 24.5 525.7 C20 527.5 14 528.5 9 529.2 C7.3 530 7.6 531 9.5 531 C13 531 16 530.3 18.5 530 C20 531 21 532.5 22 533.5" stroke="#808080" stroke-width="3.3" fill="none" stroke-linecap="round" stroke-linejoin="round"/>
<path d="M15.6 519 L16.1 521.6 C19 522.4 22 522.3 25 522.7 C27 523.5 26 525 24.5 525.7 C20 527.5 14 528.5 9 529.2 C7.3 530 7.6 531 9.5 531 C13 531 16 530.3 18.5 530 C20 531 21 532.5 22 533.5" stroke="#202020" stroke-width="1.3" fill="none" stroke-linecap="round" stroke-linejoin="round"/>
<circle cx="23.4" cy="534.4" r="2.3" fill="#202020" stroke="#ffffff" stroke-width="1.2"/>
<path d="M40.2 521.1 A8.8 3.8 0 0 1 57.8 521.1 V533.7 A8.8 3.8 0 0 1 40.2 533.7 Z M40.2 521.1 A8.8 3.8 0 0 0 57.8 521.1" stroke="#808080" stroke-width="1.1" fill="none" />
<path d="M42.3 530.6 H53.5" stroke="#808080" stroke-width="1" fill="none" stroke-dasharray="1.6 1.4"/>
<path d="M49.3 522.4 L54.4 524.9 L54.7 536.3 L49.6 533.4 Z" stroke="#ffffff" stroke-width="1.2" fill="none" />
<rect x="8.4" y="549.8" width="5.2" height="8.4" fill="none" stroke="#ffffff" stroke-width="1.1" transform="rotate(45 11 554)"/>
<rect x="20.4" y="550.3" width="5.2" height="8.4" fill="none" stroke="#ffffff" stroke-width="1.1" transform="rotate(-45 23 554.5)"/>
<rect x="8.4" y="562.3" width="5.2" height="8.4" fill="none" stroke="#ffffff" stroke-width="1.1" transform="rotate(-45 11 566.5)"/>
<rect x="20.4" y="561.8" width="5.2" height="8.4" fill="none" stroke="#ffffff" stroke-width="1.1" transform="rotate(45 23 566)"/>
<rect x="38.2" y="567.5" width="6.5" height="3.3" fill="none" stroke="#ffffff" stroke-width="1.1"/>
<rect x="43.4" y="561.5" width="6.5" height="3.3" fill="none" stroke="#ffffff" stroke-width="1.1"/>
<rect x="48.5" y="555.6" width="6.5" height="3.3" fill="none" stroke="#ffffff" stroke-width="1.1"/>
<rect x="53.6" y="549.5" width="6.5" height="3.3" fill="none" stroke="#ffffff" stroke-width="1.1"/>
<rect x="8.4" y="583.6" width="17.3" height="17.1" fill="none" stroke="#808080" stroke-width="1.1"/>
<path d="M11.5 586.4 L22.5 597.5" stroke="#ffffff" stroke-width="1.1" fill="none" />
<rect x="10.00" y="584.90" width="3" height="3" fill="#00e000"/>
<rect x="21.00" y="596.00" width="3" height="3" fill="#00e000"/>
<path d="M38.2 597.2 L44.2 589.5 H59.5 L53.6 597.2 Z" stroke="#808080" stroke-width="1.1" fill="none" />
<path d="M48.5 582.5 L48.5 601.6" stroke="#ffffff" stroke-width="1.1" fill="none" />
<rect x="47.00" y="581.00" width="3" height="3" fill="#00e000"/>
<rect x="47.00" y="600.10" width="3" height="3" fill="#00e000"/>
<path d="M7.2 614.6 H26.9 V622.6 H22 V618.8 H12 V622.6 H7.2 Z" stroke="#ffffff" stroke-width="1.1" fill="#3c0a0a" />
<path d="M7.2 633.6 V628.9 H12.3 V625.6 H21.6 V628.9 H26.9 V633.6 Z" stroke="#ffffff" stroke-width="1.1" fill="#06063c" />
<path d="M6 666 L13.5 661.8 L20 664.5 L20 670 L25.5 672.5 L27.5 675.5 L27.5 679.5 L20.5 682.8 L6.5 676.5 Z M6 666 L13 669.5 L20 664.5 M13 669.5 L13.5 675.5 L20.5 678.5 L27.5 675.5 M20.5 678.5 V682.8 M13.5 675.5 L20 670" stroke="#ffffff" stroke-width="1.1" fill="none" />
<path d="M40.1 662.3 H48.8 V673.3 H57.8 V682 H40.1 Z" stroke="#ffffff" stroke-width="1.2" fill="none" />
<!--TOOLS-END-->
</svg>
</div>

<div id="pborder"></div>
<div id="ptitle">
<span class="t">Property Browser — SolveSpace</span>
<svg width="457" height="25" viewBox="1463 0 457 25" style="position:absolute;left:0;top:0">
<path d="M1483 4.7 L1487 8.7 L1491 4.7" fill="none" stroke="#484848" stroke-width="1"/>
<rect x="1864.5" y="3.5" width="7" height="7" fill="none" stroke="#4a4a4a" stroke-width="1"/>
<circle cx="1900" cy="7" r="9" fill="#4c4c4c"/>
<path d="M1896 3 L1904 11 M1904 3 L1896 11" stroke="#dcdcdc" stroke-width="1.1" fill="none"/>
</svg>
</div>
<div id="panel">
<div id="pbar"></div>
<!--PANEL-START-->
<span class="tx l" style="left:15px;top:3px">home</span>
<span class="tx t2" style="left:78px;top:3px">drawing / constraining in 3d</span>
<span class="tx t2" style="left:15px;top:73px">active</span>
<span class="tx t2" style="left:42px;top:93px">shown dof group-name</span>
<div class="row" style="top:114px"></div>
<div class="row" style="top:154px"></div>
<div class="row" style="top:194px"></div>
<div class="row" style="top:234px"></div>
<div class="row" style="top:274px"></div>
<div class="row" style="top:314px"></div>
<div class="row" style="top:354px"></div>
<div class="row" style="top:394px"></div>
<span class="tx s" style="left:96px;top:113px">ok</span>
<span class="tx l" style="left:132px;top:113px">g001-#references</span>
<span class="tx s" style="left:96px;top:133px">ok</span>
<span class="tx l" style="left:132px;top:133px">g002-sketch-in-plane</span>
<span class="tx d" style="left:321px;top:133px">(&#916;)</span>
<span class="tx s" style="left:96px;top:153px">ok</span>
<span class="tx l" style="left:132px;top:153px">g003-extrude</span>
<span class="tx s" style="left:96px;top:173px">ok</span>
<span class="tx l" style="left:132px;top:173px">g004-sketch-in-plane</span>
<span class="tx s" style="left:96px;top:193px">ok</span>
<span class="tx l" style="left:132px;top:193px">g005-extrude</span>
<span class="tx s" style="left:96px;top:213px">ok</span>
<span class="tx l" style="left:132px;top:213px">g006-rotate</span>
<span class="tx s" style="left:96px;top:233px">ok</span>
<span class="tx l" style="left:132px;top:233px">g007-sketch-in-plane</span>
<span class="tx s" style="left:96px;top:253px">ok</span>
<span class="tx l" style="left:132px;top:253px">g009-extrude</span>
<span class="tx s" style="left:96px;top:273px">ok</span>
<span class="tx l" style="left:132px;top:273px">g00a-rotate</span>
<span class="tx s" style="left:96px;top:293px">ok</span>
<span class="tx l" style="left:132px;top:293px">g010-sketch-in-plane</span>
<span class="tx s" style="left:96px;top:313px">ok</span>
<span class="tx l" style="left:132px;top:313px">g00b-sketch-in-plane</span>
<span class="tx s" style="left:96px;top:333px">ok</span>
<span class="tx l" style="left:132px;top:333px">g00c-extrude</span>
<span class="tx s" style="left:96px;top:353px">ok</span>
<span class="tx l" style="left:132px;top:353px">g00d-rotate</span>
<span class="tx s" style="left:96px;top:373px">ok</span>
<span class="tx l" style="left:132px;top:373px">g00e-sketch-in-plane</span>
<span class="tx s" style="left:96px;top:393px">ok</span>
<span class="tx l" style="left:132px;top:393px">g00f-extrude</span>
<span class="tx l" style="left:24px;top:423px">show all</span>
<span class="tx d" style="left:105px;top:423px">/</span>
<span class="tx l" style="left:123px;top:423px">hide all</span>
<span class="tx l" style="left:24px;top:453px">line styles</span>
<span class="tx d" style="left:132px;top:453px">/</span>
<span class="tx l" style="left:150px;top:453px">view</span>
<span class="tx d" style="left:195px;top:453px">/</span>
<span class="tx l" style="left:213px;top:453px">configuration</span>
<svg width="453" height="1016" viewBox="1465 25 453 1016" style="position:absolute;left:0;top:0">
<path d="M1494.5 114 V155" stroke="#ffc864" stroke-width="1" fill="none"/>
<rect x="1524.7" y="141.9" width="11.6" height="11.6" fill="none" stroke="#d2d2d2" stroke-width="1.5"/>
<path d="M1527 147.5 L1529.6 150.6 L1533.6 144.2" fill="none" stroke="#dedede" stroke-width="1.9"/>
<rect x="1524.7" y="161.9" width="11.6" height="11.6" fill="none" stroke="#d2d2d2" stroke-width="1.5"/>
<path d="M1527 167.5 L1529.6 170.6 L1533.6 164.2" fill="none" stroke="#dedede" stroke-width="1.9"/>
<circle cx="1494" cy="167.4" r="5.2" fill="none" stroke="#ececec" stroke-width="1.5"/>
<rect x="1524.7" y="181.9" width="11.6" height="11.6" fill="none" stroke="#d2d2d2" stroke-width="1.5"/>
<path d="M1527 187.5 L1529.6 190.6 L1533.6 184.2" fill="none" stroke="#dedede" stroke-width="1.9"/>
<circle cx="1494" cy="187.4" r="5.2" fill="none" stroke="#ececec" stroke-width="1.5"/>
<rect x="1524.7" y="201.9" width="11.6" height="11.6" fill="none" stroke="#d2d2d2" stroke-width="1.5"/>
<path d="M1527 207.5 L1529.6 210.6 L1533.6 204.2" fill="none" stroke="#dedede" stroke-width="1.9"/>
<circle cx="1494" cy="207.4" r="5.2" fill="none" stroke="#ececec" stroke-width="1.5"/>
<rect x="1524.7" y="221.9" width="11.6" height="11.6" fill="none" stroke="#d2d2d2" stroke-width="1.5"/>
<path d="M1527 227.5 L1529.6 230.6 L1533.6 224.2" fill="none" stroke="#dedede" stroke-width="1.9"/>
<circle cx="1494" cy="227.4" r="5.2" fill="none" stroke="#ececec" stroke-width="1.5"/>
<rect x="1524.7" y="241.9" width="11.6" height="11.6" fill="none" stroke="#d2d2d2" stroke-width="1.5"/>
<path d="M1527 247.5 L1529.6 250.6 L1533.6 244.2" fill="none" stroke="#dedede" stroke-width="1.9"/>
<circle cx="1494" cy="247.4" r="5.2" fill="none" stroke="#ececec" stroke-width="1.5"/>
<rect x="1524.7" y="261.9" width="11.6" height="11.6" fill="none" stroke="#d2d2d2" stroke-width="1.5"/>
<path d="M1527 267.5 L1529.6 270.6 L1533.6 264.2" fill="none" stroke="#dedede" stroke-width="1.9"/>
<circle cx="1494" cy="267.4" r="5.2" fill="none" stroke="#ececec" stroke-width="1.5"/>
<rect x="1524.7" y="281.9" width="11.6" height="11.6" fill="none" stroke="#d2d2d2" stroke-width="1.5"/>
<path d="M1527 287.5 L1529.6 290.6 L1533.6 284.2" fill="none" stroke="#dedede" stroke-width="1.9"/>
<circle cx="1494" cy="287.4" r="5.2" fill="none" stroke="#ececec" stroke-width="1.5"/>
<rect x="1524.7" y="301.9" width="11.6" height="11.6" fill="none" stroke="#d2d2d2" stroke-width="1.5"/>
<path d="M1527 307.5 L1529.6 310.6 L1533.6 304.2" fill="none" stroke="#dedede" stroke-width="1.9"/>
<circle cx="1494" cy="307.4" r="5.2" fill="none" stroke="#ececec" stroke-width="1.5"/>
<rect x="1524.7" y="321.9" width="11.6" height="11.6" fill="none" stroke="#d2d2d2" stroke-width="1.5"/>
<path d="M1527 327.5 L1529.6 330.6 L1533.6 324.2" fill="none" stroke="#dedede" stroke-width="1.9"/>
<circle cx="1494" cy="327.4" r="5.2" fill="none" stroke="#ececec" stroke-width="1.5"/>
<rect x="1524.7" y="341.9" width="11.6" height="11.6" fill="none" stroke="#d2d2d2" stroke-width="1.5"/>
<path d="M1527 347.5 L1529.6 350.6 L1533.6 344.2" fill="none" stroke="#dedede" stroke-width="1.9"/>
<circle cx="1494" cy="347.4" r="5.2" fill="none" stroke="#ececec" stroke-width="1.5"/>
<rect x="1524.7" y="361.9" width="11.6" height="11.6" fill="none" stroke="#d2d2d2" stroke-width="1.5"/>
<path d="M1527 367.5 L1529.6 370.6 L1533.6 364.2" fill="none" stroke="#dedede" stroke-width="1.9"/>
<circle cx="1494" cy="367.4" r="5.2" fill="none" stroke="#ececec" stroke-width="1.5"/>
<rect x="1524.7" y="381.9" width="11.6" height="11.6" fill="none" stroke="#d2d2d2" stroke-width="1.5"/>
<path d="M1527 387.5 L1529.6 390.6 L1533.6 384.2" fill="none" stroke="#dedede" stroke-width="1.9"/>
<circle cx="1494" cy="387.4" r="5.2" fill="none" stroke="#ececec" stroke-width="1.5"/>
<rect x="1524.7" y="401.9" width="11.6" height="11.6" fill="none" stroke="#d2d2d2" stroke-width="1.5"/>
<path d="M1527 407.5 L1529.6 410.6 L1533.6 404.2" fill="none" stroke="#dedede" stroke-width="1.9"/>
<circle cx="1494" cy="407.4" r="5.2" fill="none" stroke="#ececec" stroke-width="1.5"/>
<rect x="1524.7" y="421.9" width="11.6" height="11.6" fill="none" stroke="#d2d2d2" stroke-width="1.5"/>
<path d="M1527 427.5 L1529.6 430.6 L1533.6 424.2" fill="none" stroke="#dedede" stroke-width="1.9"/>
<circle cx="1494" cy="427.4" r="5.2" fill="none" stroke="#ececec" stroke-width="1.5"/>
<circle cx="1494" cy="427.4" r="2" fill="#f0f0f0"/>
<!--PICONS-START-->
<rect x="1677" y="54" width="4" height="24.3" fill="#2c2c2c"/><rect x="1817" y="54" width="4" height="24.3" fill="#2c2c2c"/>
<path d="M1489.2 56.3 L1498.8 58.4 L1504 74.6 L1494 72.2 Z" stroke="#ffffff" stroke-width="1.3" fill="none" stroke-linejoin="round" />
<path d="M1484.8 53.8 L1509.2 78.2 M1509.2 53.8 L1484.8 78.2" stroke="#b01414" stroke-width="1.9" fill="none" stroke-linejoin="round" />
<path d="M1525.3 75.6 L1531.6 55.3 M1526.4 61 L1531.6 55.3 L1533.6 61.5" stroke="#0a9a9a" stroke-width="1.2" fill="none" stroke-linejoin="round" />
<rect x="1557.80" y="62.80" width="6.4" height="6.4" fill="#00e000"/>
<path d="M1548.8 53.8 L1573.2 78.2 M1573.2 53.8 L1548.8 78.2" stroke="#b01414" stroke-width="1.9" fill="none" stroke-linejoin="round" />
<rect x="1559.70" y="64.70" width="2.6" height="2.6" fill="#d02000"/>
<circle cx="1590.4" cy="61.3" r="6.4" fill="none" stroke="#00e000" stroke-width="1.1"/>
<rect x="1588.80" y="59.70" width="3.2" height="3.2" fill="#00e000"/>
<path d="M1583.1 75.6 L1602.9 68.3" stroke="#00e000" stroke-width="1.1" fill="none" stroke-linejoin="round" />
<rect x="1581.50" y="74.00" width="3.2" height="3.2" fill="#00e000"/>
<rect x="1601.30" y="66.70" width="3.2" height="3.2" fill="#00e000"/>
<text x="1620" y="64.8" font-family="Liberation Sans,sans-serif" font-size="9.6" fill="#ff19ff" textLength="15.5" lengthAdjust="spacingAndGlyphs">74°</text>
<path d="M1614.9 66.5 C1619 66.6 1623.5 68.5 1625.4 74.8" stroke="#ff19ff" stroke-width="1.1" fill="none" stroke-linejoin="round" />
<defs><pattern id="yh" width="2" height="2" patternUnits="userSpaceOnUse"><rect width="2" height="2" fill="#8a8a10"/><rect width="1" height="1" fill="#dcdc00"/><rect x="1" y="1" width="1" height="1" fill="#dcdc00"/></pattern></defs>
<polygon points="1646.8,59.5 1651.5,57.5 1651.5,68.5 1660.9,72.6 1660.9,76.6 1646.8,74.6" fill="url(#yh)" />
<polygon points="1651.5,57.5 1659.8,56.3 1659.8,66.2 1651.5,68.5" fill="#3e3e3e" />
<polygon points="1646.8,59.5 1657.2,55.1 1659.8,56.3 1651.5,57.5" fill="#555555" />
<polygon points="1651.5,68.5 1659.8,66.2 1668.7,68.3 1660.9,72.6" fill="#505050" />
<polygon points="1660.9,72.6 1668.7,68.3 1668.7,72.0 1660.9,76.6" fill="#3a3a3a" />
<polygon points="1690.3,59.5 1695.0,57.5 1695.0,68.5 1704.4,72.6 1704.4,76.6 1690.3,74.6" fill="#4a4a4a" />
<polygon points="1695.0,57.5 1703.3,56.3 1703.3,66.2 1695.0,68.5" fill="#707070" />
<polygon points="1690.3,59.5 1700.7,55.1 1703.3,56.3 1695.0,57.5" fill="#444444" />
<polygon points="1695.0,68.5 1703.3,66.2 1712.2,68.3 1704.4,72.6" fill="#3a3a3a" />
<polygon points="1704.4,72.6 1712.2,68.3 1712.2,72.0 1704.4,76.6" fill="#5c5c5c" />
<polygon points="1722.8,59.5 1727.5,57.5 1727.5,68.5 1736.9,72.6 1736.9,76.6 1722.8,74.6" fill="#505050" stroke="#ffffff" stroke-width="1.3" stroke-linejoin="round"/>
<polygon points="1727.5,57.5 1735.8,56.3 1735.8,66.2 1727.5,68.5" fill="#3a3a3a" stroke="#ffffff" stroke-width="1.3" stroke-linejoin="round"/>
<polygon points="1722.8,59.5 1733.2,55.1 1735.8,56.3 1727.5,57.5" fill="#606060" stroke="#ffffff" stroke-width="1.3" stroke-linejoin="round"/>
<polygon points="1727.5,68.5 1735.8,66.2 1744.7,68.3 1736.9,72.6" fill="#606060" stroke="#ffffff" stroke-width="1.3" stroke-linejoin="round"/>
<polygon points="1736.9,72.6 1744.7,68.3 1744.7,72.0 1736.9,76.6" fill="#505050" stroke="#ffffff" stroke-width="1.3" stroke-linejoin="round"/>
<polygon points="1754.8,59.5 1759.5,57.5 1759.5,68.5 1768.9,72.6 1768.9,76.6 1754.8,74.6" fill="#505050" stroke="#ffffff" stroke-width="2.0" stroke-linejoin="round"/>
<polygon points="1759.5,57.5 1767.8,56.3 1767.8,66.2 1759.5,68.5" fill="#3a3a3a" stroke="#ffffff" stroke-width="2.0" stroke-linejoin="round"/>
<polygon points="1754.8,59.5 1765.2,55.1 1767.8,56.3 1759.5,57.5" fill="#606060" stroke="#ffffff" stroke-width="2.0" stroke-linejoin="round"/>
<polygon points="1759.5,68.5 1767.8,66.2 1776.7,68.3 1768.9,72.6" fill="#606060" stroke="#ffffff" stroke-width="2.0" stroke-linejoin="round"/>
<polygon points="1768.9,72.6 1776.7,68.3 1776.7,72.0 1768.9,76.6" fill="#505050" stroke="#ffffff" stroke-width="2.0" stroke-linejoin="round"/>
<path d="M1752.8 53.8 L1777.2 78.2 M1777.2 53.8 L1752.8 78.2" stroke="#b01414" stroke-width="1.9" fill="none" stroke-linejoin="round" />
<polygon points="1786.8,59.5 1791.5,57.5 1791.5,68.5 1800.9,72.6 1800.9,76.6 1786.8,74.6" fill="#505050" stroke="#00e000" stroke-width="1.3" stroke-linejoin="round"/>
<polygon points="1791.5,57.5 1799.8,56.3 1799.8,66.2 1791.5,68.5" fill="#3a3a3a" stroke="#00e000" stroke-width="1.3" stroke-linejoin="round"/>
<polygon points="1786.8,59.5 1797.2,55.1 1799.8,56.3 1791.5,57.5" fill="#606060" stroke="#00e000" stroke-width="1.3" stroke-linejoin="round"/>
<polygon points="1791.5,68.5 1799.8,66.2 1808.7,68.3 1800.9,72.6" fill="#606060" stroke="#00e000" stroke-width="1.3" stroke-linejoin="round"/>
<polygon points="1800.9,72.6 1808.7,68.3 1808.7,72.0 1800.9,76.6" fill="#505050" stroke="#00e000" stroke-width="1.3" stroke-linejoin="round"/>
<path d="M1787 60 L1792 72 M1792 58 L1792 68 M1795 58 L1800 66 M1792 68.5 L1808 68.5 M1800 73 L1808 70" stroke="#00e000" stroke-width="0.9" fill="none" stroke-linejoin="round" />
<path d="M1784.8 53.8 L1809.2 78.2 M1809.2 53.8 L1784.8 78.2" stroke="#b01414" stroke-width="1.9" fill="none" stroke-linejoin="round" />
<path d="M1831.3 63.1 H1844.5 V75.9 H1831.3 Z M1831.3 63.1 L1837.7 56.3 H1850.7 L1844.5 63.1 M1850.7 56.3 V69.4 L1844.5 75.9" stroke="#ffffff" stroke-width="1.3" fill="none" stroke-linejoin="round" />
<!--PICONS-END-->
</svg>
<!--PANEL-END-->
</div>
<div id="bottom"></div>
</body>
</html>
